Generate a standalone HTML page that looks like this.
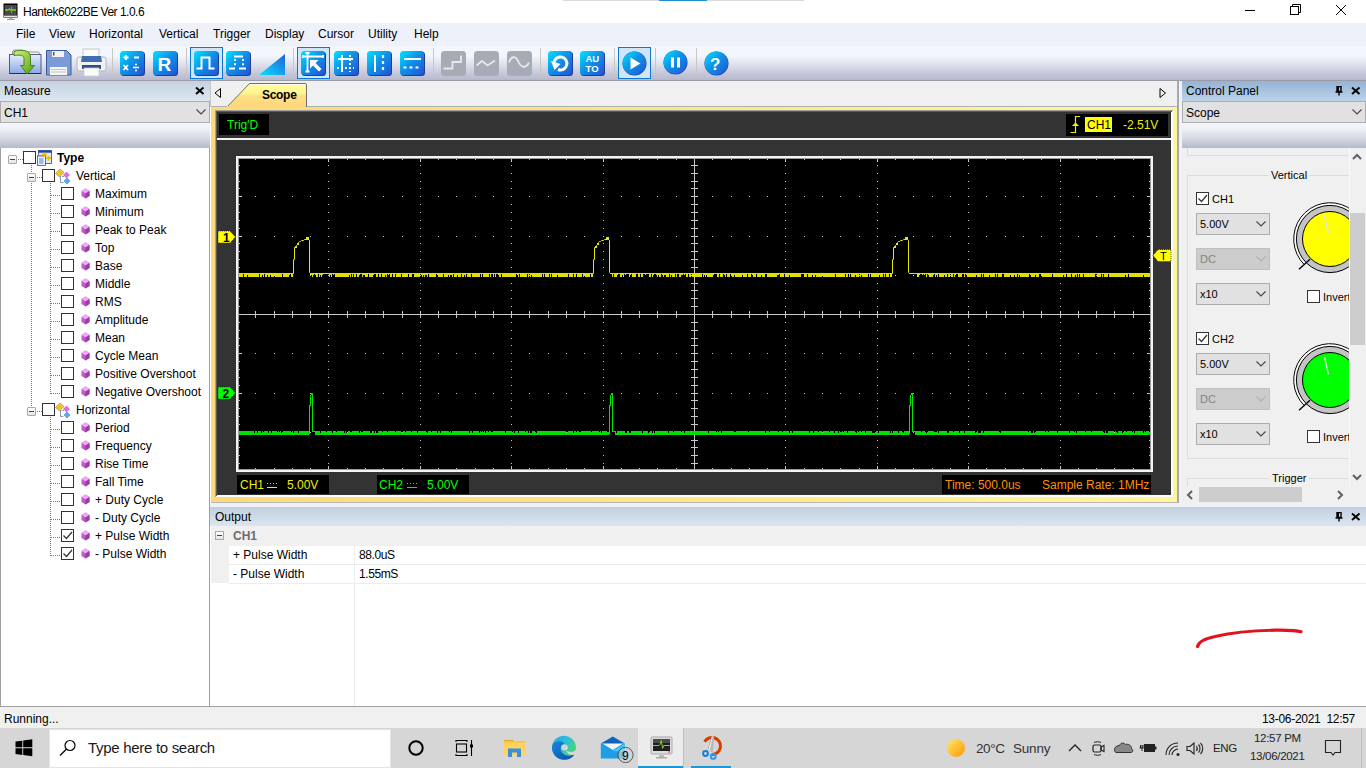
<!DOCTYPE html><html><head><meta charset="utf-8"><style>
*{margin:0;padding:0;box-sizing:border-box}
html,body{width:1366px;height:768px;overflow:hidden;background:#fff;font-family:"Liberation Sans", sans-serif;color:#000}
.ab{position:absolute}
.t{position:absolute;white-space:pre;line-height:1}
.s12{font-size:12px}
</style></head><body>

<div class="ab" style="left:0;top:0;width:1366px;height:23px;background:#fff"></div>
<div class="ab" style="left:563px;top:0;width:241px;height:1px;background:#dadada"></div>
<div class="ab" style="left:659px;top:0;width:48px;height:1px;background:#1f8fd1"></div>
<svg class="ab" style="left:2px;top:2px" width="18" height="18" viewBox="0 0 18 18">
<rect x="1.5" y="1.5" width="14" height="14" fill="#000"/>
<rect x="2.5" y="3" width="12" height="10" fill="#4a4a4a"/>
<rect x="2" y="13.5" width="13" height="1.5" fill="#e8e8e8"/>
<path d="M3 8h3l1.5-1 1 1 1.5 0 1 0h3" stroke="#7ed321" stroke-width="1.3" fill="none"/>
<path d="M9.5 5v6" stroke="#6cbf1a" stroke-width="1" fill="none"/>
<rect x="7" y="16" width="4" height="1" fill="#bbb"/><rect x="5" y="17" width="8" height="1" fill="#999"/>
</svg>
<div class="t" style="left:23px;top:6px;font-size:12px;letter-spacing:-0.5px;color:#000">Hantek6022BE Ver 1.0.6</div>
<svg class="ab" style="left:1240px;top:0" width="126" height="22" viewBox="0 0 126 22">
<path d="M5 10.5h10" stroke="#000" stroke-width="1"/>
<rect x="50.5" y="6.5" width="8" height="8" fill="none" stroke="#000" stroke-width="1"/>
<path d="M52.5 6.5v-2h8v8h-2" fill="none" stroke="#000" stroke-width="1"/>
<path d="M96 5l10 10M106 5l-10 10" stroke="#000" stroke-width="1"/>
</svg>
<div class="ab" style="left:0;top:23px;width:1366px;height:23px;background:#eef1fa"></div>
<div class="t" style="left:16px;top:28px;font-size:12px;color:#000">File</div>
<div class="t" style="left:49px;top:28px;font-size:12px;color:#000">View</div>
<div class="t" style="left:89px;top:28px;font-size:12px;color:#000">Horizontal</div>
<div class="t" style="left:159px;top:28px;font-size:12px;color:#000">Vertical</div>
<div class="t" style="left:213px;top:28px;font-size:12px;color:#000">Trigger</div>
<div class="t" style="left:265px;top:28px;font-size:12px;color:#000">Display</div>
<div class="t" style="left:318px;top:28px;font-size:12px;color:#000">Cursor</div>
<div class="t" style="left:368px;top:28px;font-size:12px;color:#000">Utility</div>
<div class="t" style="left:414px;top:28px;font-size:12px;color:#000">Help</div>
<div class="ab" style="left:0;top:46px;width:1366px;height:35px;background:linear-gradient(#f3f6fc 0%,#f3f6fc 28%,#e2e4ef 48%,#c9cbdc 75%,#b3b5cb 100%)"></div>
<div class="ab" style="left:0;top:80px;width:1366px;height:1px;background:#9c9ca6"></div>
<svg class="ab" style="left:6px;top:46px" width="40" height="34" viewBox="0 0 40 34">
<defs><linearGradient id="fld" x1="0" y1="0" x2="0" y2="1"><stop offset="0" stop-color="#e6eefa"/><stop offset="1" stop-color="#88a8e6"/></linearGradient>
<linearGradient id="arr" x1="0" y1="0" x2="1" y2="1"><stop offset="0" stop-color="#d4ef7a"/><stop offset="1" stop-color="#52a012"/></linearGradient></defs>
<path d="M6.5 8V5.5l1.5-1.5H16.5l1.5 2H32.5l1.5 2V9" fill="#f4f4ee" stroke="#8a8a80" stroke-width="0.9"/>
<rect x="3.5" y="8.5" width="31.5" height="19" fill="url(#fld)" stroke="#4e5e80" stroke-width="1"/>
<path d="M3.5 27.5h31.5" stroke="#1e2e50" stroke-width="1"/>
<path d="M8 5.5C15 3.5 24.5 3.5 24.5 11V19.5H28.5L21.2 28L14.5 19.5H18V12.5C18 9.5 14 8.5 8 9.5z" fill="url(#arr)" stroke="#3c7a10" stroke-width="0.9"/>
</svg>
<svg class="ab" style="left:46px;top:50px" width="26" height="26" viewBox="0 0 26 26">
<path d="M0.5 0.5h20l4.5 4.5v20H0.5z" fill="#7a9bd8" stroke="#3a5a9a" stroke-width="1"/>
<rect x="6" y="1" width="12" height="6" fill="#f2f2f2"/><rect x="7" y="2" width="1.5" height="3.5" fill="#555"/>
<rect x="4" y="17" width="17" height="8" fill="#f6f6f6"/>
<path d="M5 19.5h15M5 22h15" stroke="#aab" stroke-width="0.7"/>
</svg>
<svg class="ab" style="left:76px;top:48px" width="31" height="30" viewBox="0 0 31 30">
<rect x="7" y="1" width="16" height="11" fill="#fafafa" stroke="#bbb" stroke-width="0.8"/>
<rect x="1" y="9" width="29" height="14" rx="2" fill="#f2f2f2" stroke="#b5b5b5" stroke-width="1"/>
<path d="M6 8h19l1 6H5z" fill="#3e6db0"/>
<rect x="6" y="17" width="19" height="4" fill="#2c4f86"/>
<rect x="8" y="20" width="15" height="8" fill="#fbfbfb" stroke="#ccc" stroke-width="0.8"/>
</svg>
<div class="ab" style="left:112px;top:48px;width:1px;height:30px;background:#c9c6c2"></div>
<svg class="ab" style="left:120px;top:51px" width="25" height="25" viewBox="0 0 25 25"><defs><linearGradient id="g120" x1="0" y1="0" x2="1" y2="1"><stop offset="0" stop-color="#00e4ff"/><stop offset="0.45" stop-color="#0e95e8"/><stop offset="1" stop-color="#2152d6"/></linearGradient></defs><rect x="0.5" y="0.5" width="24.5" height="24.5" rx="3.5" fill="#233e8f"/><rect x="0" y="0" width="24" height="24" rx="3.5" fill="url(#g120)"/><path d="M3.5 6.5h5M6 4v5M14 6.5h5" stroke="#fff" stroke-width="1.8"/><path d="M3.5 14l4.5 5M8 14l-4.5 5" stroke="#fff" stroke-width="1.8"/><path d="M13 16.5h6" stroke="#fff" stroke-width="1.6"/><circle cx="16" cy="13.5" r="1" fill="#fff"/><circle cx="16" cy="19.5" r="1" fill="#fff"/></svg>
<svg class="ab" style="left:153px;top:51px" width="25" height="25" viewBox="0 0 25 25"><defs><linearGradient id="g153" x1="0" y1="0" x2="1" y2="1"><stop offset="0" stop-color="#00e4ff"/><stop offset="0.45" stop-color="#0e95e8"/><stop offset="1" stop-color="#2152d6"/></linearGradient></defs><rect x="0.5" y="0.5" width="24.5" height="24.5" rx="3.5" fill="#233e8f"/><rect x="0" y="0" width="24" height="24" rx="3.5" fill="url(#g153)"/><text x="4.5" y="20" font-family="Liberation Sans" font-weight="700" font-size="19" fill="#fff">R</text></svg>
<div class="ab" style="left:186px;top:48px;width:1px;height:30px;background:#c9c6c2"></div>
<div class="ab" style="left:190px;top:47px;width:33px;height:32px;border:1px solid #0a78d6;background:#d0e5f7"></div>
<svg class="ab" style="left:194px;top:51px" width="25" height="25" viewBox="0 0 25 25"><defs><linearGradient id="g194" x1="0" y1="0" x2="1" y2="1"><stop offset="0" stop-color="#00e4ff"/><stop offset="0.45" stop-color="#0e95e8"/><stop offset="1" stop-color="#2152d6"/></linearGradient></defs><rect x="0.5" y="0.5" width="24.5" height="24.5" rx="3.5" fill="#233e8f"/><rect x="0" y="0" width="24" height="24" rx="3.5" fill="url(#g194)"/><path d="M2.5 17.5h5v-11h8v11h5" stroke="#fff" fill="none" stroke-width="2"/></svg>
<svg class="ab" style="left:226px;top:51px" width="25" height="25" viewBox="0 0 25 25"><defs><linearGradient id="g226" x1="0" y1="0" x2="1" y2="1"><stop offset="0" stop-color="#00e4ff"/><stop offset="0.45" stop-color="#0e95e8"/><stop offset="1" stop-color="#2152d6"/></linearGradient></defs><rect x="0.5" y="0.5" width="24.5" height="24.5" rx="3.5" fill="#233e8f"/><rect x="0" y="0" width="24" height="24" rx="3.5" fill="url(#g226)"/><path d="M3 17.5h6M13 17.5h7M8 5.5h9" stroke="#fff" fill="none" stroke-width="2"/><path d="M9 8v8M17 8v8" stroke="#fff" stroke-width="2" stroke-dasharray="2 2.2" fill="none"/></svg>
<svg class="ab" style="left:259px;top:53px" width="27" height="23" viewBox="0 0 27 23"><defs><linearGradient id="tri" x1="0" y1="1" x2="1" y2="0"><stop offset="0" stop-color="#0ae0ff"/><stop offset="1" stop-color="#2260d8"/></linearGradient></defs><path d="M0 22L26 1V22z" fill="url(#tri)"/></svg>
<div class="ab" style="left:293px;top:48px;width:1px;height:30px;background:#c9c6c2"></div>
<div class="ab" style="left:297px;top:47px;width:33px;height:32px;border:1px solid #0a78d6;background:#d0e5f7"></div>
<svg class="ab" style="left:301px;top:51px" width="25" height="25" viewBox="0 0 25 25"><defs><linearGradient id="g301" x1="0" y1="0" x2="1" y2="1"><stop offset="0" stop-color="#00e4ff"/><stop offset="0.45" stop-color="#0e95e8"/><stop offset="1" stop-color="#2152d6"/></linearGradient></defs><rect x="0.5" y="0.5" width="24.5" height="24.5" rx="3.5" fill="#233e8f"/><rect x="0" y="0" width="24" height="24" rx="3.5" fill="url(#g301)"/><path d="M2 5.5h20M2 4v3M22 4v3M6.5 2v19M4.5 2h4M4.5 20.5h4" stroke="#fff" stroke-width="1.8" fill="none"/><path d="M9 9l8.5 0-3 3 6 6-2.5 2.5-6-6-3 3z" fill="#fff"/></svg>
<svg class="ab" style="left:334px;top:51px" width="25" height="25" viewBox="0 0 25 25"><defs><linearGradient id="g334" x1="0" y1="0" x2="1" y2="1"><stop offset="0" stop-color="#00e4ff"/><stop offset="0.45" stop-color="#0e95e8"/><stop offset="1" stop-color="#2152d6"/></linearGradient></defs><rect x="0.5" y="0.5" width="24.5" height="24.5" rx="3.5" fill="#233e8f"/><rect x="0" y="0" width="24" height="24" rx="3.5" fill="url(#g334)"/><path d="M4 8h15M8 4v17" stroke="#fff" stroke-width="2" fill="none"/><path d="M3 17h17M16 4v17" stroke="#fff" stroke-width="2" stroke-dasharray="2 2" fill="none"/></svg>
<svg class="ab" style="left:367px;top:51px" width="25" height="25" viewBox="0 0 25 25"><defs><linearGradient id="g367" x1="0" y1="0" x2="1" y2="1"><stop offset="0" stop-color="#00e4ff"/><stop offset="0.45" stop-color="#0e95e8"/><stop offset="1" stop-color="#2152d6"/></linearGradient></defs><rect x="0.5" y="0.5" width="24.5" height="24.5" rx="3.5" fill="#233e8f"/><rect x="0" y="0" width="24" height="24" rx="3.5" fill="url(#g367)"/><path d="M8 4v17" stroke="#fff" stroke-width="2" fill="none"/><path d="M16 4v17" stroke="#fff" stroke-width="2.2" stroke-dasharray="3 3" fill="none"/></svg>
<svg class="ab" style="left:400px;top:51px" width="25" height="25" viewBox="0 0 25 25"><defs><linearGradient id="g400" x1="0" y1="0" x2="1" y2="1"><stop offset="0" stop-color="#00e4ff"/><stop offset="0.45" stop-color="#0e95e8"/><stop offset="1" stop-color="#2152d6"/></linearGradient></defs><rect x="0.5" y="0.5" width="24.5" height="24.5" rx="3.5" fill="#233e8f"/><rect x="0" y="0" width="24" height="24" rx="3.5" fill="url(#g400)"/><path d="M4 8h17" stroke="#fff" stroke-width="2" fill="none"/><path d="M3.5 16.5h17" stroke="#fff" stroke-width="2.2" stroke-dasharray="3 3" fill="none"/></svg>
<div class="ab" style="left:433px;top:48px;width:1px;height:30px;background:#c9c6c2"></div>
<svg class="ab" style="left:441px;top:51px" width="25" height="25" viewBox="0 0 25 25"><rect x="0" y="0" width="25" height="25" rx="3.5" fill="#a6abb6"/><path d="M2.5 17.5h9v-6.5h8.5V4.5" stroke="#e6e8ee" fill="none" stroke-width="1.8"/></svg>
<svg class="ab" style="left:474px;top:51px" width="25" height="25" viewBox="0 0 25 25"><rect x="0" y="0" width="25" height="25" rx="3.5" fill="#a6abb6"/><path d="M2.5 14.5L8 10l5.5 4.5L21 9.5" stroke="#e6e8ee" fill="none" stroke-width="1.8"/></svg>
<svg class="ab" style="left:507px;top:51px" width="25" height="25" viewBox="0 0 25 25"><rect x="0" y="0" width="25" height="25" rx="3.5" fill="#a6abb6"/><path d="M2 11.5C4 5 8.5 4.5 11 10S18 19 22 11.5" stroke="#e6e8ee" fill="none" stroke-width="1.8"/></svg>
<div class="ab" style="left:540px;top:48px;width:1px;height:30px;background:#c9c6c2"></div>
<svg class="ab" style="left:548px;top:51px" width="25" height="25" viewBox="0 0 25 25"><defs><linearGradient id="g548" x1="0" y1="0" x2="1" y2="1"><stop offset="0" stop-color="#00e4ff"/><stop offset="0.45" stop-color="#0e95e8"/><stop offset="1" stop-color="#2152d6"/></linearGradient></defs><rect x="0.5" y="0.5" width="24.5" height="24.5" rx="3.5" fill="#233e8f"/><rect x="0" y="0" width="24" height="24" rx="3.5" fill="url(#g548)"/><path d="M10 18.5a6.5 6.5 0 1 0 -4-7" stroke="#fff" stroke-width="3" fill="none"/><path d="M3 10l3.5 9 6-6z" fill="#fff"/></svg>
<svg class="ab" style="left:580px;top:51px" width="25" height="25" viewBox="0 0 25 25"><defs><linearGradient id="g580" x1="0" y1="0" x2="1" y2="1"><stop offset="0" stop-color="#00e4ff"/><stop offset="0.45" stop-color="#0e95e8"/><stop offset="1" stop-color="#2152d6"/></linearGradient></defs><rect x="0.5" y="0.5" width="24.5" height="24.5" rx="3.5" fill="#233e8f"/><rect x="0" y="0" width="24" height="24" rx="3.5" fill="url(#g580)"/><text x="5.5" y="10.5" font-family="Liberation Sans" font-weight="700" font-size="9.5" fill="#fff">AU</text><text x="5.5" y="20.5" font-family="Liberation Sans" font-weight="700" font-size="9.5" fill="#fff">TO</text></svg>
<div class="ab" style="left:614px;top:48px;width:1px;height:30px;background:#c9c6c2"></div>
<div class="ab" style="left:618px;top:47px;width:33px;height:32px;border:1px solid #0a78d6;background:#d0e5f7"></div>
<svg class="ab" style="left:622px;top:51px" width="25" height="25" viewBox="0 0 25 25"><defs><linearGradient id="g622" x1="0" y1="0" x2="1" y2="1"><stop offset="0" stop-color="#00e4ff"/><stop offset="0.45" stop-color="#0e95e8"/><stop offset="1" stop-color="#2152d6"/></linearGradient></defs><circle cx="12.5" cy="12.5" r="12" fill="#1c3f9a"/><circle cx="12.3" cy="12.2" r="11.7" fill="url(#g622)"/><path d="M8.5 6.5v12l10-6z" fill="#fff"/></svg>
<div class="ab" style="left:655px;top:48px;width:1px;height:30px;background:#c9c6c2"></div>
<svg class="ab" style="left:663px;top:50px" width="25" height="25" viewBox="0 0 25 25"><defs><linearGradient id="g663" x1="0" y1="0" x2="1" y2="1"><stop offset="0" stop-color="#00e4ff"/><stop offset="0.45" stop-color="#0e95e8"/><stop offset="1" stop-color="#2152d6"/></linearGradient></defs><circle cx="12.5" cy="12.5" r="12" fill="#1c3f9a"/><circle cx="12.3" cy="12.2" r="11.7" fill="url(#g663)"/><rect x="8" y="7.5" width="3" height="10" fill="#fff"/><rect x="14" y="7.5" width="3" height="10" fill="#fff"/></svg>
<div class="ab" style="left:696px;top:48px;width:1px;height:30px;background:#c9c6c2"></div>
<svg class="ab" style="left:704px;top:51px" width="25" height="25" viewBox="0 0 25 25"><defs><linearGradient id="g704" x1="0" y1="0" x2="1" y2="1"><stop offset="0" stop-color="#00e4ff"/><stop offset="0.45" stop-color="#0e95e8"/><stop offset="1" stop-color="#2152d6"/></linearGradient></defs><circle cx="12.5" cy="12.5" r="12" fill="#1c3f9a"/><circle cx="12.3" cy="12.2" r="11.7" fill="url(#g704)"/><text x="6" y="19" font-family="Liberation Sans" font-weight="700" font-size="17" fill="#fff">?</text></svg>
<div class="ab" style="left:0;top:81px;width:210px;height:20px;background:linear-gradient(#c4d2e0,#dde7f2)"></div>
<div class="t" style="left:4px;top:85px;font-size:12px">Measure</div>
<svg class="ab" style="left:194px;top:85px" width="12" height="12" viewBox="0 0 12 12"><path d="M2 2.5l7.5 6.5M9.5 2.5l-7.5 6.5" stroke="#000" stroke-width="1.9"/></svg>
<div class="ab" style="left:0px;top:101px;width:210px;height:22px;background:#e1e1e1;border:1px solid #adadad"></div>
<div class="t" style="left:4px;top:107px;font-size:12px;color:#000">CH1</div>
<svg class="ab" style="left:196px;top:109px" width="10" height="6" viewBox="0 0 10 6"><path d="M0.5 0.5l4.5 4.5 4.5-4.5" stroke="#444" stroke-width="1.1" fill="none"/></svg>
<div class="ab" style="left:0;top:123px;width:210px;height:25px;background:linear-gradient(#f3f6fb 0%,#eef1f7 25%,#cfd1dd 70%,#b6b9c9 100%)"></div>
<div class="ab" style="left:0;top:148px;width:210px;height:559px;background:#fff;border-left:1px solid #a0a0a0;border-right:1px solid #a0a0a0;border-bottom:1px solid #a0a0a0"></div>
<div class="ab" style="left:8px;top:155px;width:9px;height:9px;border:1px solid #a9a9a9;border-radius:1px;background:linear-gradient(#fff,#e4e4e4)"></div>
<div class="ab" style="left:10px;top:159px;width:5px;height:1px;background:#2b3f9a"></div>
<div class="ab" style="left:18px;top:159px;width:5px;height:1px;background:repeating-linear-gradient(90deg,#777 0 1px,transparent 1px 2px)"></div>
<div class="ab" style="left:23px;top:151px;width:13px;height:13px;border:1px solid #333;background:#fff"></div>
<svg class="ab" style="left:36px;top:150px" width="16" height="16" viewBox="0 0 16 16">
<rect x="2.5" y="0.5" width="13" height="13" fill="#dfe8f6" stroke="#3a4a6a" stroke-width="0.8"/><rect x="2.5" y="0.5" width="13" height="2.2" fill="#1e3cc8"/>
<path d="M0.8 5.5h5v8.5" fill="none" stroke="#f0c030" stroke-width="1.2"/>
<rect x="1.5" y="6" width="8" height="9.5" fill="#eef3fb" stroke="#3e5080" stroke-width="0.8"/>
<path d="M3 9h4.5M3 11h4.5M3 13h4.5" stroke="#3a70e0" stroke-width="0.9"/>
<path d="M6 4.5h5M8.5 2.5v4.5M10 8h5M12.5 6v4.5" stroke="#e8b800" stroke-width="1.5"/>
</svg>
<div class="t" style="left:57px;top:152px;font-size:12px;font-weight:700">Type</div>
<div class="ab" style="left:31px;top:165px;width:1px;height:244px;background:repeating-linear-gradient(#777 0 1px,transparent 1px 2px)"></div>
<div class="ab" style="left:27px;top:173px;width:9px;height:9px;border:1px solid #a9a9a9;border-radius:1px;background:linear-gradient(#fff,#e4e4e4)"></div>
<div class="ab" style="left:29px;top:177px;width:5px;height:1px;background:#2b3f9a"></div>
<div class="ab" style="left:37px;top:177px;width:5px;height:1px;background:repeating-linear-gradient(90deg,#777 0 1px,transparent 1px 2px)"></div>
<div class="ab" style="left:42px;top:169px;width:13px;height:13px;border:1px solid #333;background:#fff"></div>
<svg class="ab" style="left:55px;top:168px" width="16" height="16" viewBox="0 0 16 16">
<path d="M0.5 5.5L5 1l4 3.5-4.5 4.5z" fill="#f2c230" stroke="#b08a10" stroke-width="0.6"/>
<path d="M5.5 8v6.5h3M7 8.5h2" stroke="#6a80a8" stroke-width="0.8" fill="none"/>
<path d="M8.5 7l3-3 3 3-3 3z" fill="#e070e8" stroke="#b040c0" stroke-width="0.5"/>
<path d="M9 13l3-3 3 3-3 3z" fill="#5aa8f4" stroke="#2a70c0" stroke-width="0.5"/>
</svg>
<div class="t" style="left:76px;top:170px;font-size:12px">Vertical</div>
<div class="ab" style="left:50px;top:183px;width:1px;height:211px;background:repeating-linear-gradient(#777 0 1px,transparent 1px 2px)"></div>
<div class="ab" style="left:51px;top:195px;width:10px;height:1px;background:repeating-linear-gradient(90deg,#777 0 1px,transparent 1px 2px)"></div>
<div class="ab" style="left:61px;top:187px;width:13px;height:13px;border:1px solid #333;background:#fff"></div>
<svg class="ab" style="left:81px;top:188px" width="9" height="11" viewBox="0 0 9 11"><path d="M4.5 0.5L8.5 3v5L4.5 10.5 0.5 8V3z" fill="#c05ac8"/><path d="M4.5 0.5L8.5 3 4.5 5.5 0.5 3z" fill="#f0a8f4"/><path d="M4.5 5.5L8.5 3v5L4.5 10.5z" fill="#9c3aa8"/></svg>
<div class="t" style="left:95px;top:188px;font-size:12px">Maximum</div>
<div class="ab" style="left:51px;top:213px;width:10px;height:1px;background:repeating-linear-gradient(90deg,#777 0 1px,transparent 1px 2px)"></div>
<div class="ab" style="left:61px;top:205px;width:13px;height:13px;border:1px solid #333;background:#fff"></div>
<svg class="ab" style="left:81px;top:206px" width="9" height="11" viewBox="0 0 9 11"><path d="M4.5 0.5L8.5 3v5L4.5 10.5 0.5 8V3z" fill="#c05ac8"/><path d="M4.5 0.5L8.5 3 4.5 5.5 0.5 3z" fill="#f0a8f4"/><path d="M4.5 5.5L8.5 3v5L4.5 10.5z" fill="#9c3aa8"/></svg>
<div class="t" style="left:95px;top:206px;font-size:12px">Minimum</div>
<div class="ab" style="left:51px;top:231px;width:10px;height:1px;background:repeating-linear-gradient(90deg,#777 0 1px,transparent 1px 2px)"></div>
<div class="ab" style="left:61px;top:223px;width:13px;height:13px;border:1px solid #333;background:#fff"></div>
<svg class="ab" style="left:81px;top:224px" width="9" height="11" viewBox="0 0 9 11"><path d="M4.5 0.5L8.5 3v5L4.5 10.5 0.5 8V3z" fill="#c05ac8"/><path d="M4.5 0.5L8.5 3 4.5 5.5 0.5 3z" fill="#f0a8f4"/><path d="M4.5 5.5L8.5 3v5L4.5 10.5z" fill="#9c3aa8"/></svg>
<div class="t" style="left:95px;top:224px;font-size:12px">Peak to Peak</div>
<div class="ab" style="left:51px;top:249px;width:10px;height:1px;background:repeating-linear-gradient(90deg,#777 0 1px,transparent 1px 2px)"></div>
<div class="ab" style="left:61px;top:241px;width:13px;height:13px;border:1px solid #333;background:#fff"></div>
<svg class="ab" style="left:81px;top:242px" width="9" height="11" viewBox="0 0 9 11"><path d="M4.5 0.5L8.5 3v5L4.5 10.5 0.5 8V3z" fill="#c05ac8"/><path d="M4.5 0.5L8.5 3 4.5 5.5 0.5 3z" fill="#f0a8f4"/><path d="M4.5 5.5L8.5 3v5L4.5 10.5z" fill="#9c3aa8"/></svg>
<div class="t" style="left:95px;top:242px;font-size:12px">Top</div>
<div class="ab" style="left:51px;top:267px;width:10px;height:1px;background:repeating-linear-gradient(90deg,#777 0 1px,transparent 1px 2px)"></div>
<div class="ab" style="left:61px;top:259px;width:13px;height:13px;border:1px solid #333;background:#fff"></div>
<svg class="ab" style="left:81px;top:260px" width="9" height="11" viewBox="0 0 9 11"><path d="M4.5 0.5L8.5 3v5L4.5 10.5 0.5 8V3z" fill="#c05ac8"/><path d="M4.5 0.5L8.5 3 4.5 5.5 0.5 3z" fill="#f0a8f4"/><path d="M4.5 5.5L8.5 3v5L4.5 10.5z" fill="#9c3aa8"/></svg>
<div class="t" style="left:95px;top:260px;font-size:12px">Base</div>
<div class="ab" style="left:51px;top:285px;width:10px;height:1px;background:repeating-linear-gradient(90deg,#777 0 1px,transparent 1px 2px)"></div>
<div class="ab" style="left:61px;top:277px;width:13px;height:13px;border:1px solid #333;background:#fff"></div>
<svg class="ab" style="left:81px;top:278px" width="9" height="11" viewBox="0 0 9 11"><path d="M4.5 0.5L8.5 3v5L4.5 10.5 0.5 8V3z" fill="#c05ac8"/><path d="M4.5 0.5L8.5 3 4.5 5.5 0.5 3z" fill="#f0a8f4"/><path d="M4.5 5.5L8.5 3v5L4.5 10.5z" fill="#9c3aa8"/></svg>
<div class="t" style="left:95px;top:278px;font-size:12px">Middle</div>
<div class="ab" style="left:51px;top:303px;width:10px;height:1px;background:repeating-linear-gradient(90deg,#777 0 1px,transparent 1px 2px)"></div>
<div class="ab" style="left:61px;top:295px;width:13px;height:13px;border:1px solid #333;background:#fff"></div>
<svg class="ab" style="left:81px;top:296px" width="9" height="11" viewBox="0 0 9 11"><path d="M4.5 0.5L8.5 3v5L4.5 10.5 0.5 8V3z" fill="#c05ac8"/><path d="M4.5 0.5L8.5 3 4.5 5.5 0.5 3z" fill="#f0a8f4"/><path d="M4.5 5.5L8.5 3v5L4.5 10.5z" fill="#9c3aa8"/></svg>
<div class="t" style="left:95px;top:296px;font-size:12px">RMS</div>
<div class="ab" style="left:51px;top:321px;width:10px;height:1px;background:repeating-linear-gradient(90deg,#777 0 1px,transparent 1px 2px)"></div>
<div class="ab" style="left:61px;top:313px;width:13px;height:13px;border:1px solid #333;background:#fff"></div>
<svg class="ab" style="left:81px;top:314px" width="9" height="11" viewBox="0 0 9 11"><path d="M4.5 0.5L8.5 3v5L4.5 10.5 0.5 8V3z" fill="#c05ac8"/><path d="M4.5 0.5L8.5 3 4.5 5.5 0.5 3z" fill="#f0a8f4"/><path d="M4.5 5.5L8.5 3v5L4.5 10.5z" fill="#9c3aa8"/></svg>
<div class="t" style="left:95px;top:314px;font-size:12px">Amplitude</div>
<div class="ab" style="left:51px;top:339px;width:10px;height:1px;background:repeating-linear-gradient(90deg,#777 0 1px,transparent 1px 2px)"></div>
<div class="ab" style="left:61px;top:331px;width:13px;height:13px;border:1px solid #333;background:#fff"></div>
<svg class="ab" style="left:81px;top:332px" width="9" height="11" viewBox="0 0 9 11"><path d="M4.5 0.5L8.5 3v5L4.5 10.5 0.5 8V3z" fill="#c05ac8"/><path d="M4.5 0.5L8.5 3 4.5 5.5 0.5 3z" fill="#f0a8f4"/><path d="M4.5 5.5L8.5 3v5L4.5 10.5z" fill="#9c3aa8"/></svg>
<div class="t" style="left:95px;top:332px;font-size:12px">Mean</div>
<div class="ab" style="left:51px;top:357px;width:10px;height:1px;background:repeating-linear-gradient(90deg,#777 0 1px,transparent 1px 2px)"></div>
<div class="ab" style="left:61px;top:349px;width:13px;height:13px;border:1px solid #333;background:#fff"></div>
<svg class="ab" style="left:81px;top:350px" width="9" height="11" viewBox="0 0 9 11"><path d="M4.5 0.5L8.5 3v5L4.5 10.5 0.5 8V3z" fill="#c05ac8"/><path d="M4.5 0.5L8.5 3 4.5 5.5 0.5 3z" fill="#f0a8f4"/><path d="M4.5 5.5L8.5 3v5L4.5 10.5z" fill="#9c3aa8"/></svg>
<div class="t" style="left:95px;top:350px;font-size:12px">Cycle Mean</div>
<div class="ab" style="left:51px;top:375px;width:10px;height:1px;background:repeating-linear-gradient(90deg,#777 0 1px,transparent 1px 2px)"></div>
<div class="ab" style="left:61px;top:367px;width:13px;height:13px;border:1px solid #333;background:#fff"></div>
<svg class="ab" style="left:81px;top:368px" width="9" height="11" viewBox="0 0 9 11"><path d="M4.5 0.5L8.5 3v5L4.5 10.5 0.5 8V3z" fill="#c05ac8"/><path d="M4.5 0.5L8.5 3 4.5 5.5 0.5 3z" fill="#f0a8f4"/><path d="M4.5 5.5L8.5 3v5L4.5 10.5z" fill="#9c3aa8"/></svg>
<div class="t" style="left:95px;top:368px;font-size:12px">Positive Overshoot</div>
<div class="ab" style="left:51px;top:393px;width:10px;height:1px;background:repeating-linear-gradient(90deg,#777 0 1px,transparent 1px 2px)"></div>
<div class="ab" style="left:61px;top:385px;width:13px;height:13px;border:1px solid #333;background:#fff"></div>
<svg class="ab" style="left:81px;top:386px" width="9" height="11" viewBox="0 0 9 11"><path d="M4.5 0.5L8.5 3v5L4.5 10.5 0.5 8V3z" fill="#c05ac8"/><path d="M4.5 0.5L8.5 3 4.5 5.5 0.5 3z" fill="#f0a8f4"/><path d="M4.5 5.5L8.5 3v5L4.5 10.5z" fill="#9c3aa8"/></svg>
<div class="t" style="left:95px;top:386px;font-size:12px">Negative Overshoot</div>
<div class="ab" style="left:27px;top:407px;width:9px;height:9px;border:1px solid #a9a9a9;border-radius:1px;background:linear-gradient(#fff,#e4e4e4)"></div>
<div class="ab" style="left:29px;top:411px;width:5px;height:1px;background:#2b3f9a"></div>
<div class="ab" style="left:37px;top:411px;width:5px;height:1px;background:repeating-linear-gradient(90deg,#777 0 1px,transparent 1px 2px)"></div>
<div class="ab" style="left:42px;top:403px;width:13px;height:13px;border:1px solid #333;background:#fff"></div>
<svg class="ab" style="left:55px;top:402px" width="16" height="16" viewBox="0 0 16 16">
<path d="M0.5 5.5L5 1l4 3.5-4.5 4.5z" fill="#f2c230" stroke="#b08a10" stroke-width="0.6"/>
<path d="M5.5 8v6.5h3M7 8.5h2" stroke="#6a80a8" stroke-width="0.8" fill="none"/>
<path d="M8.5 7l3-3 3 3-3 3z" fill="#e070e8" stroke="#b040c0" stroke-width="0.5"/>
<path d="M9 13l3-3 3 3-3 3z" fill="#5aa8f4" stroke="#2a70c0" stroke-width="0.5"/>
</svg>
<div class="t" style="left:76px;top:404px;font-size:12px">Horizontal</div>
<div class="ab" style="left:51px;top:429px;width:10px;height:1px;background:repeating-linear-gradient(90deg,#777 0 1px,transparent 1px 2px)"></div>
<div class="ab" style="left:61px;top:421px;width:13px;height:13px;border:1px solid #333;background:#fff"></div>
<svg class="ab" style="left:81px;top:422px" width="9" height="11" viewBox="0 0 9 11"><path d="M4.5 0.5L8.5 3v5L4.5 10.5 0.5 8V3z" fill="#c05ac8"/><path d="M4.5 0.5L8.5 3 4.5 5.5 0.5 3z" fill="#f0a8f4"/><path d="M4.5 5.5L8.5 3v5L4.5 10.5z" fill="#9c3aa8"/></svg>
<div class="t" style="left:95px;top:422px;font-size:12px">Period</div>
<div class="ab" style="left:51px;top:447px;width:10px;height:1px;background:repeating-linear-gradient(90deg,#777 0 1px,transparent 1px 2px)"></div>
<div class="ab" style="left:61px;top:439px;width:13px;height:13px;border:1px solid #333;background:#fff"></div>
<svg class="ab" style="left:81px;top:440px" width="9" height="11" viewBox="0 0 9 11"><path d="M4.5 0.5L8.5 3v5L4.5 10.5 0.5 8V3z" fill="#c05ac8"/><path d="M4.5 0.5L8.5 3 4.5 5.5 0.5 3z" fill="#f0a8f4"/><path d="M4.5 5.5L8.5 3v5L4.5 10.5z" fill="#9c3aa8"/></svg>
<div class="t" style="left:95px;top:440px;font-size:12px">Frequency</div>
<div class="ab" style="left:51px;top:465px;width:10px;height:1px;background:repeating-linear-gradient(90deg,#777 0 1px,transparent 1px 2px)"></div>
<div class="ab" style="left:61px;top:457px;width:13px;height:13px;border:1px solid #333;background:#fff"></div>
<svg class="ab" style="left:81px;top:458px" width="9" height="11" viewBox="0 0 9 11"><path d="M4.5 0.5L8.5 3v5L4.5 10.5 0.5 8V3z" fill="#c05ac8"/><path d="M4.5 0.5L8.5 3 4.5 5.5 0.5 3z" fill="#f0a8f4"/><path d="M4.5 5.5L8.5 3v5L4.5 10.5z" fill="#9c3aa8"/></svg>
<div class="t" style="left:95px;top:458px;font-size:12px">Rise Time</div>
<div class="ab" style="left:51px;top:483px;width:10px;height:1px;background:repeating-linear-gradient(90deg,#777 0 1px,transparent 1px 2px)"></div>
<div class="ab" style="left:61px;top:475px;width:13px;height:13px;border:1px solid #333;background:#fff"></div>
<svg class="ab" style="left:81px;top:476px" width="9" height="11" viewBox="0 0 9 11"><path d="M4.5 0.5L8.5 3v5L4.5 10.5 0.5 8V3z" fill="#c05ac8"/><path d="M4.5 0.5L8.5 3 4.5 5.5 0.5 3z" fill="#f0a8f4"/><path d="M4.5 5.5L8.5 3v5L4.5 10.5z" fill="#9c3aa8"/></svg>
<div class="t" style="left:95px;top:476px;font-size:12px">Fall Time</div>
<div class="ab" style="left:51px;top:501px;width:10px;height:1px;background:repeating-linear-gradient(90deg,#777 0 1px,transparent 1px 2px)"></div>
<div class="ab" style="left:61px;top:493px;width:13px;height:13px;border:1px solid #333;background:#fff"></div>
<svg class="ab" style="left:81px;top:494px" width="9" height="11" viewBox="0 0 9 11"><path d="M4.5 0.5L8.5 3v5L4.5 10.5 0.5 8V3z" fill="#c05ac8"/><path d="M4.5 0.5L8.5 3 4.5 5.5 0.5 3z" fill="#f0a8f4"/><path d="M4.5 5.5L8.5 3v5L4.5 10.5z" fill="#9c3aa8"/></svg>
<div class="t" style="left:95px;top:494px;font-size:12px">+ Duty Cycle</div>
<div class="ab" style="left:51px;top:519px;width:10px;height:1px;background:repeating-linear-gradient(90deg,#777 0 1px,transparent 1px 2px)"></div>
<div class="ab" style="left:61px;top:511px;width:13px;height:13px;border:1px solid #333;background:#fff"></div>
<svg class="ab" style="left:81px;top:512px" width="9" height="11" viewBox="0 0 9 11"><path d="M4.5 0.5L8.5 3v5L4.5 10.5 0.5 8V3z" fill="#c05ac8"/><path d="M4.5 0.5L8.5 3 4.5 5.5 0.5 3z" fill="#f0a8f4"/><path d="M4.5 5.5L8.5 3v5L4.5 10.5z" fill="#9c3aa8"/></svg>
<div class="t" style="left:95px;top:512px;font-size:12px">- Duty Cycle</div>
<div class="ab" style="left:51px;top:537px;width:10px;height:1px;background:repeating-linear-gradient(90deg,#777 0 1px,transparent 1px 2px)"></div>
<div class="ab" style="left:61px;top:529px;width:13px;height:13px;border:1px solid #333;background:#fff"></div>
<svg class="ab" style="left:61px;top:529px" width="13" height="13" viewBox="0 0 13 13"><path d="M2.5 6.5l3 3 5.5-6.5" stroke="#333" stroke-width="1.2" fill="none"/></svg>
<svg class="ab" style="left:81px;top:530px" width="9" height="11" viewBox="0 0 9 11"><path d="M4.5 0.5L8.5 3v5L4.5 10.5 0.5 8V3z" fill="#c05ac8"/><path d="M4.5 0.5L8.5 3 4.5 5.5 0.5 3z" fill="#f0a8f4"/><path d="M4.5 5.5L8.5 3v5L4.5 10.5z" fill="#9c3aa8"/></svg>
<div class="t" style="left:95px;top:530px;font-size:12px">+ Pulse Width</div>
<div class="ab" style="left:51px;top:555px;width:10px;height:1px;background:repeating-linear-gradient(90deg,#777 0 1px,transparent 1px 2px)"></div>
<div class="ab" style="left:61px;top:547px;width:13px;height:13px;border:1px solid #333;background:#fff"></div>
<svg class="ab" style="left:61px;top:547px" width="13" height="13" viewBox="0 0 13 13"><path d="M2.5 6.5l3 3 5.5-6.5" stroke="#333" stroke-width="1.2" fill="none"/></svg>
<svg class="ab" style="left:81px;top:548px" width="9" height="11" viewBox="0 0 9 11"><path d="M4.5 0.5L8.5 3v5L4.5 10.5 0.5 8V3z" fill="#c05ac8"/><path d="M4.5 0.5L8.5 3 4.5 5.5 0.5 3z" fill="#f0a8f4"/><path d="M4.5 5.5L8.5 3v5L4.5 10.5z" fill="#9c3aa8"/></svg>
<div class="t" style="left:95px;top:548px;font-size:12px">- Pulse Width</div>
<div class="ab" style="left:50px;top:417px;width:1px;height:139px;background:repeating-linear-gradient(#777 0 1px,transparent 1px 2px)"></div>
<div class="ab" style="left:210px;top:81px;width:968px;height:26px;background:#f0f0f0;border-left:1px solid #c8c8c8"></div>
<div class="ab" style="left:211px;top:106px;width:967px;height:1px;background:#b0b0b0"></div>
<svg class="ab" style="left:214px;top:88px" width="8" height="10" viewBox="0 0 8 10"><path d="M6.5 0.5v9l-5.5-4.5z" fill="none" stroke="#000" stroke-width="1"/></svg>
<svg class="ab" style="left:1159px;top:88px" width="8" height="10" viewBox="0 0 8 10"><path d="M1 0.5v9l5.5-4.5z" fill="none" stroke="#000" stroke-width="1"/></svg>
<svg class="ab" style="left:226px;top:82px" width="82" height="26" viewBox="0 0 82 26"><defs><linearGradient id="tabg" x1="0" y1="0" x2="0" y2="1"><stop offset="0" stop-color="#fffb9c"/><stop offset="0.4" stop-color="#fff68f"/><stop offset="0.52" stop-color="#fde083"/><stop offset="1" stop-color="#fdd57c"/></linearGradient></defs><path d="M0.5 25.5L23.5 1.5H79Q80.5 1.5 80.5 3V25.5" fill="url(#tabg)" stroke="#707070" stroke-width="1"/><path d="M24 2.5H79.5" stroke="#fffde8" stroke-width="1"/><rect x="1" y="24" width="79" height="2" fill="#fcd57c"/></svg>
<div class="t" style="left:262px;top:89px;font-size:12px;font-weight:700;letter-spacing:-0.3px">Scope</div>
<div class="ab" style="left:211px;top:107px;width:967px;height:396px;background:linear-gradient(90deg,#fdd97a 0%,#fee282 35%,#fff094 75%,#fff59c 100%)"></div>
<div class="ab" style="left:1177px;top:81px;width:1px;height:422px;background:#a8a8a8"></div>
<div class="ab" style="left:211px;top:502px;width:967px;height:1px;background:#b8b8b0"></div>
<div class="ab" style="left:215px;top:110px;width:958px;height:387px;background:#fdfdfd;border-left:1px solid #a0a0a0;border-top:1px solid #a0a0a0"></div>
<div class="ab" style="left:216px;top:111px;width:956px;height:385px;background:#fdfdfd;border-left:1px solid #5a5a5a;border-top:1px solid #5a5a5a"></div>
<div class="ab" style="left:217px;top:112px;width:954px;height:383px;background:#333"></div>
<div class="ab" style="left:219px;top:114px;width:50px;height:21px;background:#000"></div>
<div class="t" style="left:227px;top:119px;font-size:12px;color:#00ff00">Trig'D</div>
<div class="ab" style="left:1066px;top:114px;width:102px;height:22px;background:#000"></div>
<svg class="ab" style="left:1069px;top:115px" width="12" height="20" viewBox="0 0 12 20"><path d="M1.5 17.5H6.5V1.5H11" stroke="#f0f000" stroke-width="1.2" fill="none"/><path d="M2.8 11l3.7-3.5 3.7 3.5z" fill="#f0f000"/></svg>
<div class="ab" style="left:1085px;top:117px;width:27px;height:15px;background:#ffff00"></div>
<div class="t" style="left:1087px;top:119px;font-size:12px;color:#000">CH1</div>
<div class="t" style="left:1123px;top:119px;font-size:12px;color:#f0f000">-2.51V</div>
<div class="ab" style="left:217px;top:138px;width:954px;height:2px;background:#f4f4f4"></div>
<div class="ab" style="left:236px;top:156px;width:917px;height:316px;border:2px solid #f4f4f4;background:#000;box-shadow:inset 0 0 0 1px #9a9a9a"></div>
<svg class="ab" style="left:0;top:0" width="1366" height="768" viewBox="0 0 1366 768"><path d="M328 165h1v1h-1zM328 173h1v1h-1zM328 181h1v1h-1zM328 188h1v1h-1zM328 196h1v1h-1zM328 204h1v1h-1zM328 212h1v1h-1zM328 220h1v1h-1zM328 228h1v1h-1zM328 236h1v1h-1zM328 243h1v1h-1zM328 251h1v1h-1zM328 259h1v1h-1zM328 267h1v1h-1zM328 275h1v1h-1zM328 283h1v1h-1zM328 290h1v1h-1zM328 298h1v1h-1zM328 306h1v1h-1zM328 314h1v1h-1zM328 322h1v1h-1zM328 330h1v1h-1zM328 338h1v1h-1zM328 345h1v1h-1zM328 353h1v1h-1zM328 361h1v1h-1zM328 369h1v1h-1zM328 377h1v1h-1zM328 385h1v1h-1zM328 393h1v1h-1zM328 400h1v1h-1zM328 408h1v1h-1zM328 416h1v1h-1zM328 424h1v1h-1zM328 432h1v1h-1zM328 440h1v1h-1zM328 447h1v1h-1zM328 455h1v1h-1zM328 463h1v1h-1zM420 165h1v1h-1zM420 173h1v1h-1zM420 181h1v1h-1zM420 188h1v1h-1zM420 196h1v1h-1zM420 204h1v1h-1zM420 212h1v1h-1zM420 220h1v1h-1zM420 228h1v1h-1zM420 236h1v1h-1zM420 243h1v1h-1zM420 251h1v1h-1zM420 259h1v1h-1zM420 267h1v1h-1zM420 275h1v1h-1zM420 283h1v1h-1zM420 290h1v1h-1zM420 298h1v1h-1zM420 306h1v1h-1zM420 314h1v1h-1zM420 322h1v1h-1zM420 330h1v1h-1zM420 338h1v1h-1zM420 345h1v1h-1zM420 353h1v1h-1zM420 361h1v1h-1zM420 369h1v1h-1zM420 377h1v1h-1zM420 385h1v1h-1zM420 393h1v1h-1zM420 400h1v1h-1zM420 408h1v1h-1zM420 416h1v1h-1zM420 424h1v1h-1zM420 432h1v1h-1zM420 440h1v1h-1zM420 447h1v1h-1zM420 455h1v1h-1zM420 463h1v1h-1zM511 165h1v1h-1zM511 173h1v1h-1zM511 181h1v1h-1zM511 188h1v1h-1zM511 196h1v1h-1zM511 204h1v1h-1zM511 212h1v1h-1zM511 220h1v1h-1zM511 228h1v1h-1zM511 236h1v1h-1zM511 243h1v1h-1zM511 251h1v1h-1zM511 259h1v1h-1zM511 267h1v1h-1zM511 275h1v1h-1zM511 283h1v1h-1zM511 290h1v1h-1zM511 298h1v1h-1zM511 306h1v1h-1zM511 314h1v1h-1zM511 322h1v1h-1zM511 330h1v1h-1zM511 338h1v1h-1zM511 345h1v1h-1zM511 353h1v1h-1zM511 361h1v1h-1zM511 369h1v1h-1zM511 377h1v1h-1zM511 385h1v1h-1zM511 393h1v1h-1zM511 400h1v1h-1zM511 408h1v1h-1zM511 416h1v1h-1zM511 424h1v1h-1zM511 432h1v1h-1zM511 440h1v1h-1zM511 447h1v1h-1zM511 455h1v1h-1zM511 463h1v1h-1zM603 165h1v1h-1zM603 173h1v1h-1zM603 181h1v1h-1zM603 188h1v1h-1zM603 196h1v1h-1zM603 204h1v1h-1zM603 212h1v1h-1zM603 220h1v1h-1zM603 228h1v1h-1zM603 236h1v1h-1zM603 243h1v1h-1zM603 251h1v1h-1zM603 259h1v1h-1zM603 267h1v1h-1zM603 275h1v1h-1zM603 283h1v1h-1zM603 290h1v1h-1zM603 298h1v1h-1zM603 306h1v1h-1zM603 314h1v1h-1zM603 322h1v1h-1zM603 330h1v1h-1zM603 338h1v1h-1zM603 345h1v1h-1zM603 353h1v1h-1zM603 361h1v1h-1zM603 369h1v1h-1zM603 377h1v1h-1zM603 385h1v1h-1zM603 393h1v1h-1zM603 400h1v1h-1zM603 408h1v1h-1zM603 416h1v1h-1zM603 424h1v1h-1zM603 432h1v1h-1zM603 440h1v1h-1zM603 447h1v1h-1zM603 455h1v1h-1zM603 463h1v1h-1zM785 165h1v1h-1zM785 173h1v1h-1zM785 181h1v1h-1zM785 188h1v1h-1zM785 196h1v1h-1zM785 204h1v1h-1zM785 212h1v1h-1zM785 220h1v1h-1zM785 228h1v1h-1zM785 236h1v1h-1zM785 243h1v1h-1zM785 251h1v1h-1zM785 259h1v1h-1zM785 267h1v1h-1zM785 275h1v1h-1zM785 283h1v1h-1zM785 290h1v1h-1zM785 298h1v1h-1zM785 306h1v1h-1zM785 314h1v1h-1zM785 322h1v1h-1zM785 330h1v1h-1zM785 338h1v1h-1zM785 345h1v1h-1zM785 353h1v1h-1zM785 361h1v1h-1zM785 369h1v1h-1zM785 377h1v1h-1zM785 385h1v1h-1zM785 393h1v1h-1zM785 400h1v1h-1zM785 408h1v1h-1zM785 416h1v1h-1zM785 424h1v1h-1zM785 432h1v1h-1zM785 440h1v1h-1zM785 447h1v1h-1zM785 455h1v1h-1zM785 463h1v1h-1zM877 165h1v1h-1zM877 173h1v1h-1zM877 181h1v1h-1zM877 188h1v1h-1zM877 196h1v1h-1zM877 204h1v1h-1zM877 212h1v1h-1zM877 220h1v1h-1zM877 228h1v1h-1zM877 236h1v1h-1zM877 243h1v1h-1zM877 251h1v1h-1zM877 259h1v1h-1zM877 267h1v1h-1zM877 275h1v1h-1zM877 283h1v1h-1zM877 290h1v1h-1zM877 298h1v1h-1zM877 306h1v1h-1zM877 314h1v1h-1zM877 322h1v1h-1zM877 330h1v1h-1zM877 338h1v1h-1zM877 345h1v1h-1zM877 353h1v1h-1zM877 361h1v1h-1zM877 369h1v1h-1zM877 377h1v1h-1zM877 385h1v1h-1zM877 393h1v1h-1zM877 400h1v1h-1zM877 408h1v1h-1zM877 416h1v1h-1zM877 424h1v1h-1zM877 432h1v1h-1zM877 440h1v1h-1zM877 447h1v1h-1zM877 455h1v1h-1zM877 463h1v1h-1zM968 165h1v1h-1zM968 173h1v1h-1zM968 181h1v1h-1zM968 188h1v1h-1zM968 196h1v1h-1zM968 204h1v1h-1zM968 212h1v1h-1zM968 220h1v1h-1zM968 228h1v1h-1zM968 236h1v1h-1zM968 243h1v1h-1zM968 251h1v1h-1zM968 259h1v1h-1zM968 267h1v1h-1zM968 275h1v1h-1zM968 283h1v1h-1zM968 290h1v1h-1zM968 298h1v1h-1zM968 306h1v1h-1zM968 314h1v1h-1zM968 322h1v1h-1zM968 330h1v1h-1zM968 338h1v1h-1zM968 345h1v1h-1zM968 353h1v1h-1zM968 361h1v1h-1zM968 369h1v1h-1zM968 377h1v1h-1zM968 385h1v1h-1zM968 393h1v1h-1zM968 400h1v1h-1zM968 408h1v1h-1zM968 416h1v1h-1zM968 424h1v1h-1zM968 432h1v1h-1zM968 440h1v1h-1zM968 447h1v1h-1zM968 455h1v1h-1zM968 463h1v1h-1zM1060 165h1v1h-1zM1060 173h1v1h-1zM1060 181h1v1h-1zM1060 188h1v1h-1zM1060 196h1v1h-1zM1060 204h1v1h-1zM1060 212h1v1h-1zM1060 220h1v1h-1zM1060 228h1v1h-1zM1060 236h1v1h-1zM1060 243h1v1h-1zM1060 251h1v1h-1zM1060 259h1v1h-1zM1060 267h1v1h-1zM1060 275h1v1h-1zM1060 283h1v1h-1zM1060 290h1v1h-1zM1060 298h1v1h-1zM1060 306h1v1h-1zM1060 314h1v1h-1zM1060 322h1v1h-1zM1060 330h1v1h-1zM1060 338h1v1h-1zM1060 345h1v1h-1zM1060 353h1v1h-1zM1060 361h1v1h-1zM1060 369h1v1h-1zM1060 377h1v1h-1zM1060 385h1v1h-1zM1060 393h1v1h-1zM1060 400h1v1h-1zM1060 408h1v1h-1zM1060 416h1v1h-1zM1060 424h1v1h-1zM1060 432h1v1h-1zM1060 440h1v1h-1zM1060 447h1v1h-1zM1060 455h1v1h-1zM1060 463h1v1h-1zM255 196h1v1h-1zM274 196h1v1h-1zM292 196h1v1h-1zM310 196h1v1h-1zM328 196h1v1h-1zM347 196h1v1h-1zM365 196h1v1h-1zM383 196h1v1h-1zM402 196h1v1h-1zM420 196h1v1h-1zM438 196h1v1h-1zM456 196h1v1h-1zM475 196h1v1h-1zM493 196h1v1h-1zM511 196h1v1h-1zM529 196h1v1h-1zM548 196h1v1h-1zM566 196h1v1h-1zM584 196h1v1h-1zM603 196h1v1h-1zM621 196h1v1h-1zM639 196h1v1h-1zM657 196h1v1h-1zM676 196h1v1h-1zM694 196h1v1h-1zM712 196h1v1h-1zM731 196h1v1h-1zM749 196h1v1h-1zM767 196h1v1h-1zM785 196h1v1h-1zM804 196h1v1h-1zM822 196h1v1h-1zM840 196h1v1h-1zM859 196h1v1h-1zM877 196h1v1h-1zM895 196h1v1h-1zM913 196h1v1h-1zM932 196h1v1h-1zM950 196h1v1h-1zM968 196h1v1h-1zM986 196h1v1h-1zM1005 196h1v1h-1zM1023 196h1v1h-1zM1041 196h1v1h-1zM1060 196h1v1h-1zM1078 196h1v1h-1zM1096 196h1v1h-1zM1114 196h1v1h-1zM1133 196h1v1h-1zM255 236h1v1h-1zM274 236h1v1h-1zM292 236h1v1h-1zM310 236h1v1h-1zM328 236h1v1h-1zM347 236h1v1h-1zM365 236h1v1h-1zM383 236h1v1h-1zM402 236h1v1h-1zM420 236h1v1h-1zM438 236h1v1h-1zM456 236h1v1h-1zM475 236h1v1h-1zM493 236h1v1h-1zM511 236h1v1h-1zM529 236h1v1h-1zM548 236h1v1h-1zM566 236h1v1h-1zM584 236h1v1h-1zM603 236h1v1h-1zM621 236h1v1h-1zM639 236h1v1h-1zM657 236h1v1h-1zM676 236h1v1h-1zM694 236h1v1h-1zM712 236h1v1h-1zM731 236h1v1h-1zM749 236h1v1h-1zM767 236h1v1h-1zM785 236h1v1h-1zM804 236h1v1h-1zM822 236h1v1h-1zM840 236h1v1h-1zM859 236h1v1h-1zM877 236h1v1h-1zM895 236h1v1h-1zM913 236h1v1h-1zM932 236h1v1h-1zM950 236h1v1h-1zM968 236h1v1h-1zM986 236h1v1h-1zM1005 236h1v1h-1zM1023 236h1v1h-1zM1041 236h1v1h-1zM1060 236h1v1h-1zM1078 236h1v1h-1zM1096 236h1v1h-1zM1114 236h1v1h-1zM1133 236h1v1h-1zM255 275h1v1h-1zM274 275h1v1h-1zM292 275h1v1h-1zM310 275h1v1h-1zM328 275h1v1h-1zM347 275h1v1h-1zM365 275h1v1h-1zM383 275h1v1h-1zM402 275h1v1h-1zM420 275h1v1h-1zM438 275h1v1h-1zM456 275h1v1h-1zM475 275h1v1h-1zM493 275h1v1h-1zM511 275h1v1h-1zM529 275h1v1h-1zM548 275h1v1h-1zM566 275h1v1h-1zM584 275h1v1h-1zM603 275h1v1h-1zM621 275h1v1h-1zM639 275h1v1h-1zM657 275h1v1h-1zM676 275h1v1h-1zM694 275h1v1h-1zM712 275h1v1h-1zM731 275h1v1h-1zM749 275h1v1h-1zM767 275h1v1h-1zM785 275h1v1h-1zM804 275h1v1h-1zM822 275h1v1h-1zM840 275h1v1h-1zM859 275h1v1h-1zM877 275h1v1h-1zM895 275h1v1h-1zM913 275h1v1h-1zM932 275h1v1h-1zM950 275h1v1h-1zM968 275h1v1h-1zM986 275h1v1h-1zM1005 275h1v1h-1zM1023 275h1v1h-1zM1041 275h1v1h-1zM1060 275h1v1h-1zM1078 275h1v1h-1zM1096 275h1v1h-1zM1114 275h1v1h-1zM1133 275h1v1h-1zM255 353h1v1h-1zM274 353h1v1h-1zM292 353h1v1h-1zM310 353h1v1h-1zM328 353h1v1h-1zM347 353h1v1h-1zM365 353h1v1h-1zM383 353h1v1h-1zM402 353h1v1h-1zM420 353h1v1h-1zM438 353h1v1h-1zM456 353h1v1h-1zM475 353h1v1h-1zM493 353h1v1h-1zM511 353h1v1h-1zM529 353h1v1h-1zM548 353h1v1h-1zM566 353h1v1h-1zM584 353h1v1h-1zM603 353h1v1h-1zM621 353h1v1h-1zM639 353h1v1h-1zM657 353h1v1h-1zM676 353h1v1h-1zM694 353h1v1h-1zM712 353h1v1h-1zM731 353h1v1h-1zM749 353h1v1h-1zM767 353h1v1h-1zM785 353h1v1h-1zM804 353h1v1h-1zM822 353h1v1h-1zM840 353h1v1h-1zM859 353h1v1h-1zM877 353h1v1h-1zM895 353h1v1h-1zM913 353h1v1h-1zM932 353h1v1h-1zM950 353h1v1h-1zM968 353h1v1h-1zM986 353h1v1h-1zM1005 353h1v1h-1zM1023 353h1v1h-1zM1041 353h1v1h-1zM1060 353h1v1h-1zM1078 353h1v1h-1zM1096 353h1v1h-1zM1114 353h1v1h-1zM1133 353h1v1h-1zM255 393h1v1h-1zM274 393h1v1h-1zM292 393h1v1h-1zM310 393h1v1h-1zM328 393h1v1h-1zM347 393h1v1h-1zM365 393h1v1h-1zM383 393h1v1h-1zM402 393h1v1h-1zM420 393h1v1h-1zM438 393h1v1h-1zM456 393h1v1h-1zM475 393h1v1h-1zM493 393h1v1h-1zM511 393h1v1h-1zM529 393h1v1h-1zM548 393h1v1h-1zM566 393h1v1h-1zM584 393h1v1h-1zM603 393h1v1h-1zM621 393h1v1h-1zM639 393h1v1h-1zM657 393h1v1h-1zM676 393h1v1h-1zM694 393h1v1h-1zM712 393h1v1h-1zM731 393h1v1h-1zM749 393h1v1h-1zM767 393h1v1h-1zM785 393h1v1h-1zM804 393h1v1h-1zM822 393h1v1h-1zM840 393h1v1h-1zM859 393h1v1h-1zM877 393h1v1h-1zM895 393h1v1h-1zM913 393h1v1h-1zM932 393h1v1h-1zM950 393h1v1h-1zM968 393h1v1h-1zM986 393h1v1h-1zM1005 393h1v1h-1zM1023 393h1v1h-1zM1041 393h1v1h-1zM1060 393h1v1h-1zM1078 393h1v1h-1zM1096 393h1v1h-1zM1114 393h1v1h-1zM1133 393h1v1h-1zM255 432h1v1h-1zM274 432h1v1h-1zM292 432h1v1h-1zM310 432h1v1h-1zM328 432h1v1h-1zM347 432h1v1h-1zM365 432h1v1h-1zM383 432h1v1h-1zM402 432h1v1h-1zM420 432h1v1h-1zM438 432h1v1h-1zM456 432h1v1h-1zM475 432h1v1h-1zM493 432h1v1h-1zM511 432h1v1h-1zM529 432h1v1h-1zM548 432h1v1h-1zM566 432h1v1h-1zM584 432h1v1h-1zM603 432h1v1h-1zM621 432h1v1h-1zM639 432h1v1h-1zM657 432h1v1h-1zM676 432h1v1h-1zM694 432h1v1h-1zM712 432h1v1h-1zM731 432h1v1h-1zM749 432h1v1h-1zM767 432h1v1h-1zM785 432h1v1h-1zM804 432h1v1h-1zM822 432h1v1h-1zM840 432h1v1h-1zM859 432h1v1h-1zM877 432h1v1h-1zM895 432h1v1h-1zM913 432h1v1h-1zM932 432h1v1h-1zM950 432h1v1h-1zM968 432h1v1h-1zM986 432h1v1h-1zM1005 432h1v1h-1zM1023 432h1v1h-1zM1041 432h1v1h-1zM1060 432h1v1h-1zM1078 432h1v1h-1zM1096 432h1v1h-1zM1114 432h1v1h-1zM1133 432h1v1h-1zM255 159h1v1h-1zM255 468h1v1h-1zM274 159h1v1h-1zM274 468h1v1h-1zM292 159h1v1h-1zM292 468h1v1h-1zM310 159h1v1h-1zM310 468h1v1h-1zM328 159h1v3h-1zM328 466h1v3h-1zM347 159h1v1h-1zM347 468h1v1h-1zM365 159h1v1h-1zM365 468h1v1h-1zM383 159h1v1h-1zM383 468h1v1h-1zM402 159h1v1h-1zM402 468h1v1h-1zM420 159h1v3h-1zM420 466h1v3h-1zM438 159h1v1h-1zM438 468h1v1h-1zM456 159h1v1h-1zM456 468h1v1h-1zM475 159h1v1h-1zM475 468h1v1h-1zM493 159h1v1h-1zM493 468h1v1h-1zM511 159h1v3h-1zM511 466h1v3h-1zM529 159h1v1h-1zM529 468h1v1h-1zM548 159h1v1h-1zM548 468h1v1h-1zM566 159h1v1h-1zM566 468h1v1h-1zM584 159h1v1h-1zM584 468h1v1h-1zM603 159h1v3h-1zM603 466h1v3h-1zM621 159h1v1h-1zM621 468h1v1h-1zM639 159h1v1h-1zM639 468h1v1h-1zM657 159h1v1h-1zM657 468h1v1h-1zM676 159h1v1h-1zM676 468h1v1h-1zM694 159h1v3h-1zM694 466h1v3h-1zM712 159h1v1h-1zM712 468h1v1h-1zM731 159h1v1h-1zM731 468h1v1h-1zM749 159h1v1h-1zM749 468h1v1h-1zM767 159h1v1h-1zM767 468h1v1h-1zM785 159h1v3h-1zM785 466h1v3h-1zM804 159h1v1h-1zM804 468h1v1h-1zM822 159h1v1h-1zM822 468h1v1h-1zM840 159h1v1h-1zM840 468h1v1h-1zM859 159h1v1h-1zM859 468h1v1h-1zM877 159h1v3h-1zM877 466h1v3h-1zM895 159h1v1h-1zM895 468h1v1h-1zM913 159h1v1h-1zM913 468h1v1h-1zM932 159h1v1h-1zM932 468h1v1h-1zM950 159h1v1h-1zM950 468h1v1h-1zM968 159h1v3h-1zM968 466h1v3h-1zM986 159h1v1h-1zM986 468h1v1h-1zM1005 159h1v1h-1zM1005 468h1v1h-1zM1023 159h1v1h-1zM1023 468h1v1h-1zM1041 159h1v1h-1zM1041 468h1v1h-1zM1060 159h1v3h-1zM1060 466h1v3h-1zM1078 159h1v1h-1zM1078 468h1v1h-1zM1096 159h1v1h-1zM1096 468h1v1h-1zM1114 159h1v1h-1zM1114 468h1v1h-1zM1133 159h1v1h-1zM1133 468h1v1h-1zM239 165h1v1h-1zM1149 165h1v1h-1zM239 173h1v1h-1zM1149 173h1v1h-1zM239 181h1v1h-1zM1149 181h1v1h-1zM239 188h1v1h-1zM1149 188h1v1h-1zM239 196h3v1h-3zM1147 196h3v1h-3zM239 204h1v1h-1zM1149 204h1v1h-1zM239 212h1v1h-1zM1149 212h1v1h-1zM239 220h1v1h-1zM1149 220h1v1h-1zM239 228h1v1h-1zM1149 228h1v1h-1zM239 236h3v1h-3zM1147 236h3v1h-3zM239 243h1v1h-1zM1149 243h1v1h-1zM239 251h1v1h-1zM1149 251h1v1h-1zM239 259h1v1h-1zM1149 259h1v1h-1zM239 267h1v1h-1zM1149 267h1v1h-1zM239 275h3v1h-3zM1147 275h3v1h-3zM239 283h1v1h-1zM1149 283h1v1h-1zM239 290h1v1h-1zM1149 290h1v1h-1zM239 298h1v1h-1zM1149 298h1v1h-1zM239 306h1v1h-1zM1149 306h1v1h-1zM239 314h3v1h-3zM1147 314h3v1h-3zM239 322h1v1h-1zM1149 322h1v1h-1zM239 330h1v1h-1zM1149 330h1v1h-1zM239 338h1v1h-1zM1149 338h1v1h-1zM239 345h1v1h-1zM1149 345h1v1h-1zM239 353h3v1h-3zM1147 353h3v1h-3zM239 361h1v1h-1zM1149 361h1v1h-1zM239 369h1v1h-1zM1149 369h1v1h-1zM239 377h1v1h-1zM1149 377h1v1h-1zM239 385h1v1h-1zM1149 385h1v1h-1zM239 393h3v1h-3zM1147 393h3v1h-3zM239 400h1v1h-1zM1149 400h1v1h-1zM239 408h1v1h-1zM1149 408h1v1h-1zM239 416h1v1h-1zM1149 416h1v1h-1zM239 424h1v1h-1zM1149 424h1v1h-1zM239 432h3v1h-3zM1147 432h3v1h-3zM239 440h1v1h-1zM1149 440h1v1h-1zM239 447h1v1h-1zM1149 447h1v1h-1zM239 455h1v1h-1zM1149 455h1v1h-1zM239 463h1v1h-1zM1149 463h1v1h-1z" fill="#c8c8c8"/><path d="M239 314h911v1h-911z M694 159h1v310h-1zM255 311h1v7h-1zM274 311h1v7h-1zM292 311h1v7h-1zM310 311h1v7h-1zM328 311h1v7h-1zM347 311h1v7h-1zM365 311h1v7h-1zM383 311h1v7h-1zM402 311h1v7h-1zM420 311h1v7h-1zM438 311h1v7h-1zM456 311h1v7h-1zM475 311h1v7h-1zM493 311h1v7h-1zM511 311h1v7h-1zM529 311h1v7h-1zM548 311h1v7h-1zM566 311h1v7h-1zM584 311h1v7h-1zM603 311h1v7h-1zM621 311h1v7h-1zM639 311h1v7h-1zM657 311h1v7h-1zM676 311h1v7h-1zM694 311h1v7h-1zM712 311h1v7h-1zM731 311h1v7h-1zM749 311h1v7h-1zM767 311h1v7h-1zM785 311h1v7h-1zM804 311h1v7h-1zM822 311h1v7h-1zM840 311h1v7h-1zM859 311h1v7h-1zM877 311h1v7h-1zM895 311h1v7h-1zM913 311h1v7h-1zM932 311h1v7h-1zM950 311h1v7h-1zM968 311h1v7h-1zM986 311h1v7h-1zM1005 311h1v7h-1zM1023 311h1v7h-1zM1041 311h1v7h-1zM1060 311h1v7h-1zM1078 311h1v7h-1zM1096 311h1v7h-1zM1114 311h1v7h-1zM1133 311h1v7h-1zM691 165h7v1h-7zM691 173h7v1h-7zM691 181h7v1h-7zM691 188h7v1h-7zM691 196h7v1h-7zM691 204h7v1h-7zM691 212h7v1h-7zM691 220h7v1h-7zM691 228h7v1h-7zM691 236h7v1h-7zM691 243h7v1h-7zM691 251h7v1h-7zM691 259h7v1h-7zM691 267h7v1h-7zM691 275h7v1h-7zM691 283h7v1h-7zM691 290h7v1h-7zM691 298h7v1h-7zM691 306h7v1h-7zM691 314h7v1h-7zM691 322h7v1h-7zM691 330h7v1h-7zM691 338h7v1h-7zM691 345h7v1h-7zM691 353h7v1h-7zM691 361h7v1h-7zM691 369h7v1h-7zM691 377h7v1h-7zM691 385h7v1h-7zM691 393h7v1h-7zM691 400h7v1h-7zM691 408h7v1h-7zM691 416h7v1h-7zM691 424h7v1h-7zM691 432h7v1h-7zM691 440h7v1h-7zM691 447h7v1h-7zM691 455h7v1h-7zM691 463h7v1h-7z" fill="#c8c8c8"/><path d="M239 273h54v1h-54zM310 273h283v1h-283zM610 273h282v1h-282zM909 273h241v1h-241zM239 274h4v3h-4zM244 274h3v3h-3zM248 274h11v3h-11zM260 274h2v3h-2zM263 274h1v3h-1zM265 274h2v3h-2zM268 274h2v3h-2zM271 274h3v3h-3zM275 274h7v3h-7zM283 274h6v3h-6zM291 274h2v3h-2zM312 274h1v3h-1zM316 274h2v3h-2zM319 274h1v3h-1zM321 274h1v3h-1zM329 274h1v3h-1zM331 274h1v3h-1zM335 274h14v3h-14zM350 274h1v3h-1zM352 274h1v3h-1zM354 274h2v3h-2zM357 274h2v3h-2zM362 274h1v3h-1zM365 274h3v3h-3zM369 274h4v3h-4zM376 274h2v3h-2zM379 274h2v3h-2zM382 274h3v3h-3zM386 274h1v3h-1zM390 274h2v3h-2zM393 274h2v3h-2zM396 274h5v3h-5zM402 274h6v3h-6zM409 274h3v3h-3zM414 274h6v3h-6zM422 274h1v3h-1zM424 274h1v3h-1zM427 274h1v3h-1zM429 274h7v3h-7zM438 274h5v3h-5zM444 274h4v3h-4zM449 274h1v3h-1zM452 274h1v3h-1zM454 274h3v3h-3zM458 274h3v3h-3zM462 274h2v3h-2zM465 274h1v3h-1zM467 274h4v3h-4zM472 274h8v3h-8zM481 274h1v3h-1zM483 274h6v3h-6zM490 274h1v3h-1zM493 274h1v3h-1zM495 274h1v3h-1zM499 274h2v3h-2zM502 274h14v3h-14zM518 274h1v3h-1zM520 274h7v3h-7zM528 274h1v3h-1zM530 274h1v3h-1zM532 274h10v3h-10zM543 274h1v3h-1zM545 274h4v3h-4zM550 274h1v3h-1zM552 274h5v3h-5zM558 274h10v3h-10zM569 274h4v3h-4zM574 274h2v3h-2zM577 274h5v3h-5zM583 274h1v3h-1zM585 274h5v3h-5zM591 274h2v3h-2zM612 274h1v3h-1zM614 274h3v3h-3zM620 274h2v3h-2zM623 274h1v3h-1zM629 274h1v3h-1zM632 274h4v3h-4zM638 274h2v3h-2zM641 274h2v3h-2zM649 274h2v3h-2zM652 274h1v3h-1zM657 274h1v3h-1zM659 274h2v3h-2zM663 274h1v3h-1zM666 274h3v3h-3zM670 274h1v3h-1zM672 274h3v3h-3zM676 274h1v3h-1zM679 274h2v3h-2zM686 274h2v3h-2zM689 274h2v3h-2zM692 274h10v3h-10zM703 274h1v3h-1zM705 274h1v3h-1zM707 274h6v3h-6zM717 274h2v3h-2zM720 274h3v3h-3zM725 274h1v3h-1zM727 274h3v3h-3zM732 274h2v3h-2zM735 274h7v3h-7zM743 274h4v3h-4zM748 274h3v3h-3zM753 274h3v3h-3zM757 274h4v3h-4zM762 274h3v3h-3zM767 274h10v3h-10zM780 274h4v3h-4zM785 274h4v3h-4zM790 274h11v3h-11zM804 274h3v3h-3zM808 274h4v3h-4zM813 274h2v3h-2zM816 274h6v3h-6zM823 274h12v3h-12zM836 274h9v3h-9zM846 274h2v3h-2zM849 274h1v3h-1zM851 274h4v3h-4zM856 274h3v3h-3zM860 274h1v3h-1zM862 274h6v3h-6zM869 274h1v3h-1zM871 274h8v3h-8zM880 274h3v3h-3zM884 274h1v3h-1zM886 274h3v3h-3zM890 274h2v3h-2zM917 274h2v3h-2zM926 274h1v3h-1zM929 274h4v3h-4zM935 274h1v3h-1zM937 274h1v3h-1zM939 274h5v3h-5zM945 274h2v3h-2zM948 274h2v3h-2zM951 274h2v3h-2zM954 274h1v3h-1zM958 274h4v3h-4zM964 274h1v3h-1zM967 274h9v3h-9zM977 274h4v3h-4zM982 274h1v3h-1zM984 274h5v3h-5zM990 274h5v3h-5zM996 274h1v3h-1zM998 274h4v3h-4zM1004 274h6v3h-6zM1011 274h3v3h-3zM1015 274h2v3h-2zM1018 274h1v3h-1zM1020 274h9v3h-9zM1031 274h4v3h-4zM1036 274h3v3h-3zM1042 274h10v3h-10zM1053 274h10v3h-10zM1064 274h2v3h-2zM1067 274h4v3h-4zM1072 274h3v3h-3zM1076 274h1v3h-1zM1078 274h1v3h-1zM1080 274h3v3h-3zM1084 274h11v3h-11zM1097 274h4v3h-4zM1102 274h1v3h-1zM1104 274h4v3h-4zM1109 274h16v3h-16zM1126 274h2v3h-2zM1129 274h14v3h-14zM1144 274h6v3h-6zM247 274h1v1h-1zM262 274h1v1h-1zM267 274h1v1h-1zM270 274h1v1h-1zM274 274h1v1h-1zM289 274h1v1h-1zM310 274h2v1h-2zM313 274h1v1h-1zM315 274h1v1h-1zM320 274h1v1h-1zM322 274h1v1h-1zM330 274h1v1h-1zM333 274h1v1h-1zM349 274h1v1h-1zM359 274h1v1h-1zM363 274h2v1h-2zM373 274h1v1h-1zM385 274h1v1h-1zM388 274h1v1h-1zM421 274h1v1h-1zM423 274h1v1h-1zM425 274h2v1h-2zM437 274h1v1h-1zM448 274h1v1h-1zM450 274h2v1h-2zM457 274h1v1h-1zM464 274h1v1h-1zM498 274h1v1h-1zM517 274h1v1h-1zM531 274h1v1h-1zM557 274h1v1h-1zM584 274h1v1h-1zM617 274h1v1h-1zM622 274h1v1h-1zM625 274h1v1h-1zM630 274h1v1h-1zM645 274h1v1h-1zM653 274h1v1h-1zM656 274h1v1h-1zM658 274h1v1h-1zM662 274h1v1h-1zM664 274h2v1h-2zM671 274h1v1h-1zM681 274h2v1h-2zM684 274h1v1h-1zM704 274h1v1h-1zM706 274h1v1h-1zM713 274h1v1h-1zM724 274h1v1h-1zM731 274h1v1h-1zM734 274h1v1h-1zM742 274h1v1h-1zM752 274h1v1h-1zM761 274h1v1h-1zM777 274h2v1h-2zM789 274h1v1h-1zM812 274h1v1h-1zM815 274h1v1h-1zM822 274h1v1h-1zM855 274h1v1h-1zM861 274h1v1h-1zM879 274h1v1h-1zM919 274h1v1h-1zM922 274h1v1h-1zM924 274h1v1h-1zM928 274h1v1h-1zM933 274h1v1h-1zM936 274h1v1h-1zM944 274h1v1h-1zM955 274h1v1h-1zM966 274h1v1h-1zM976 274h1v1h-1zM989 274h1v1h-1zM1010 274h1v1h-1zM1014 274h1v1h-1zM1019 274h1v1h-1zM1030 274h1v1h-1zM1035 274h1v1h-1zM1041 274h1v1h-1zM1063 274h1v1h-1zM1075 274h1v1h-1zM1125 274h1v1h-1zM1143 274h1v1h-1z" fill="#e0e000"/><path d="M292.5 273.5 L293.5 273.5 L293.5 259.5 L294.5 259.5 L294.5 247.5 L295.5 247.5 L295.5 246.5 L296.5 245.5 L297.5 244.5 L297.5 243.5 L298.5 242.5 L299.5 241.5 L300.5 241.5 L301.5 240.5 L303.5 240.5 L304.5 239.5 L308.5 239.5 L309.5 240.5 L309.5 272.5 L310.5 273.5 L313.5 273.5M592.5 273.5 L593.5 273.5 L593.5 259.5 L594.5 259.5 L594.5 247.5 L595.5 247.5 L595.5 246.5 L596.5 245.5 L597.5 244.5 L597.5 243.5 L598.5 242.5 L599.5 241.5 L600.5 241.5 L601.5 240.5 L603.5 240.5 L604.5 239.5 L608.5 239.5 L609.5 240.5 L609.5 272.5 L610.5 273.5 L613.5 273.5M891.5 273.5 L892.5 273.5 L892.5 259.5 L893.5 259.5 L893.5 247.5 L894.5 247.5 L894.5 246.5 L895.5 245.5 L896.5 244.5 L896.5 243.5 L897.5 242.5 L898.5 241.5 L899.5 241.5 L900.5 240.5 L902.5 240.5 L903.5 239.5 L907.5 239.5 L908.5 240.5 L908.5 272.5 L909.5 273.5 L912.5 273.5" stroke="#e6e600" stroke-width="1" fill="none"/><rect x="306" y="237" width="3" height="3" fill="#e6e600"/><rect x="295" y="246" width="2" height="2" fill="#e6e600"/><rect x="297" y="243" width="2" height="2" fill="#e6e600"/><rect x="606" y="237" width="3" height="3" fill="#e6e600"/><rect x="595" y="246" width="2" height="2" fill="#e6e600"/><rect x="597" y="243" width="2" height="2" fill="#e6e600"/><rect x="905" y="237" width="3" height="3" fill="#e6e600"/><rect x="894" y="246" width="2" height="2" fill="#e6e600"/><rect x="896" y="243" width="2" height="2" fill="#e6e600"/><path d="M239 431h15V435h-15zM254 433h1V435h-1zM255 431h2V435h-2zM257 433h1V435h-1zM258 431h3V435h-3zM261 433h1V435h-1zM262 431h1V435h-1zM263 432h1V435h-1zM264 431h4V435h-4zM268 433h1V435h-1zM269 431h2V435h-2zM271 433h1V435h-1zM272 431h5V435h-5zM277 432h1V435h-1zM278 431h1V435h-1zM279 432h1V435h-1zM280 431h1V435h-1zM281 433h1V435h-1zM282 432h1V435h-1zM283 431h8V435h-8zM291 432h1V435h-1zM292 431h1V435h-1zM293 433h1V435h-1zM294 431h4V435h-4zM298 433h1V435h-1zM299 431h10V435h-10zM315 431h5V435h-5zM320 433h1V435h-1zM321 431h5V435h-5zM326 432h1V435h-1zM327 431h5V435h-5zM332 433h1V435h-1zM333 431h3V435h-3zM336 432h1V435h-1zM337 431h7V435h-7zM344 433h1V435h-1zM345 431h1V435h-1zM346 433h2V435h-2zM348 431h2V435h-2zM350 432h2V435h-2zM352 431h7V435h-7zM359 433h1V435h-1zM360 431h1V435h-1zM361 432h2V435h-2zM363 431h7V435h-7zM370 433h2V435h-2zM372 431h2V435h-2zM374 433h1V435h-1zM375 431h1V435h-1zM376 433h2V435h-2zM378 431h4V435h-4zM382 432h1V435h-1zM383 431h4V435h-4zM387 432h1V435h-1zM388 431h7V435h-7zM395 432h1V435h-1zM396 431h5V435h-5zM401 432h1V435h-1zM402 433h1V435h-1zM403 431h2V435h-2zM405 432h1V435h-1zM406 431h5V435h-5zM411 432h1V435h-1zM412 431h5V435h-5zM417 433h1V435h-1zM418 431h8V435h-8zM426 432h1V435h-1zM427 433h1V435h-1zM428 431h3V435h-3zM431 432h1V435h-1zM432 431h5V435h-5zM437 433h1V435h-1zM438 431h2V435h-2zM440 433h1V435h-1zM441 431h8V435h-8zM449 432h1V435h-1zM450 431h1V435h-1zM451 433h1V435h-1zM452 431h17V435h-17zM469 433h1V435h-1zM470 431h2V435h-2zM472 433h1V435h-1zM473 431h6V435h-6zM479 433h1V435h-1zM480 431h1V435h-1zM481 432h1V435h-1zM482 431h1V435h-1zM483 432h1V435h-1zM484 431h1V435h-1zM485 433h1V435h-1zM486 431h2V435h-2zM488 432h1V435h-1zM489 431h2V435h-2zM491 432h2V435h-2zM493 431h12V435h-12zM505 433h1V435h-1zM506 431h6V435h-6zM512 432h1V435h-1zM513 431h1V435h-1zM514 433h1V435h-1zM515 431h3V435h-3zM518 433h1V435h-1zM519 431h6V435h-6zM525 432h1V435h-1zM526 431h2V435h-2zM528 433h1V435h-1zM529 431h1V435h-1zM530 433h2V435h-2zM532 431h3V435h-3zM535 432h1V435h-1zM536 433h1V435h-1zM537 431h29V435h-29zM566 433h1V435h-1zM567 432h1V435h-1zM568 431h5V435h-5zM573 433h1V435h-1zM574 431h2V435h-2zM576 432h1V435h-1zM577 431h2V435h-2zM579 432h2V435h-2zM581 431h10V435h-10zM591 432h1V435h-1zM592 431h7V435h-7zM599 432h1V435h-1zM600 431h1V435h-1zM601 433h1V435h-1zM602 431h5V435h-5zM607 432h2V435h-2zM615 431h1V435h-1zM616 433h1V435h-1zM617 431h8V435h-8zM625 433h2V435h-2zM627 431h2V435h-2zM629 433h2V435h-2zM631 431h11V435h-11zM642 433h1V435h-1zM643 431h5V435h-5zM648 433h1V435h-1zM649 432h1V435h-1zM650 431h2V435h-2zM652 433h1V435h-1zM653 431h1V435h-1zM654 433h1V435h-1zM655 431h13V435h-13zM668 433h1V435h-1zM669 431h4V435h-4zM673 432h1V435h-1zM674 431h7V435h-7zM681 432h1V435h-1zM682 431h2V435h-2zM684 433h1V435h-1zM685 431h23V435h-23zM708 433h1V435h-1zM709 431h7V435h-7zM716 432h1V435h-1zM717 431h1V435h-1zM718 432h1V435h-1zM719 431h2V435h-2zM721 433h1V435h-1zM722 431h12V435h-12zM734 432h2V435h-2zM736 431h12V435h-12zM748 432h1V435h-1zM749 431h16V435h-16zM765 433h1V435h-1zM766 431h3V435h-3zM769 432h1V435h-1zM770 431h8V435h-8zM778 432h1V435h-1zM779 431h3V435h-3zM782 432h1V435h-1zM783 431h6V435h-6zM789 433h1V435h-1zM790 431h2V435h-2zM792 433h1V435h-1zM793 431h16V435h-16zM809 433h1V435h-1zM810 431h3V435h-3zM813 433h1V435h-1zM814 431h4V435h-4zM818 432h1V435h-1zM819 431h3V435h-3zM822 433h1V435h-1zM823 431h6V435h-6zM829 432h1V435h-1zM830 431h4V435h-4zM834 433h1V435h-1zM835 431h3V435h-3zM838 433h1V435h-1zM839 431h1V435h-1zM840 432h2V435h-2zM842 431h1V435h-1zM843 432h1V435h-1zM844 431h3V435h-3zM847 433h1V435h-1zM848 431h7V435h-7zM855 432h1V435h-1zM856 433h1V435h-1zM857 431h1V435h-1zM858 432h1V435h-1zM859 431h2V435h-2zM861 432h1V435h-1zM862 431h3V435h-3zM865 433h1V435h-1zM866 431h6V435h-6zM872 433h3V435h-3zM875 432h1V435h-1zM876 431h2V435h-2zM878 433h1V435h-1zM879 431h11V435h-11zM890 433h1V435h-1zM891 431h1V435h-1zM892 433h1V435h-1zM893 431h5V435h-5zM898 433h1V435h-1zM899 431h3V435h-3zM902 432h1V435h-1zM903 433h1V435h-1zM904 431h5V435h-5zM915 431h6V435h-6zM921 432h1V435h-1zM922 431h3V435h-3zM925 432h1V435h-1zM926 433h1V435h-1zM927 432h1V435h-1zM928 431h6V435h-6zM934 432h3V435h-3zM937 431h1V435h-1zM938 433h1V435h-1zM939 431h8V435h-8zM947 433h2V435h-2zM949 431h4V435h-4zM953 432h1V435h-1zM954 431h5V435h-5zM959 433h1V435h-1zM960 431h4V435h-4zM964 433h1V435h-1zM965 431h10V435h-10zM975 433h1V435h-1zM976 432h1V435h-1zM977 431h1V435h-1zM978 433h3V435h-3zM981 431h2V435h-2zM983 433h1V435h-1zM984 431h15V435h-15zM999 432h1V435h-1zM1000 433h1V435h-1zM1001 431h27V435h-27zM1028 432h1V435h-1zM1029 431h2V435h-2zM1031 433h2V435h-2zM1033 431h1V435h-1zM1034 433h1V435h-1zM1035 432h1V435h-1zM1036 431h9V435h-9zM1045 432h1V435h-1zM1046 431h2V435h-2zM1048 432h1V435h-1zM1049 431h8V435h-8zM1057 433h1V435h-1zM1058 431h11V435h-11zM1069 433h1V435h-1zM1070 431h4V435h-4zM1074 432h1V435h-1zM1075 431h1V435h-1zM1076 433h1V435h-1zM1077 431h8V435h-8zM1085 432h1V435h-1zM1086 431h5V435h-5zM1091 432h1V435h-1zM1092 431h11V435h-11zM1103 432h1V435h-1zM1104 433h1V435h-1zM1105 431h1V435h-1zM1106 433h2V435h-2zM1108 431h6V435h-6zM1114 433h1V435h-1zM1115 431h1V435h-1zM1116 432h1V435h-1zM1117 433h1V435h-1zM1118 431h4V435h-4zM1122 433h1V435h-1zM1123 432h1V435h-1zM1124 431h2V435h-2zM1126 432h1V435h-1zM1127 431h5V435h-5zM1132 432h1V435h-1zM1133 431h1V435h-1zM1134 433h1V435h-1zM1135 431h8V435h-8zM1143 433h1V435h-1zM1144 431h1V435h-1zM1145 432h1V435h-1zM1146 431h3V435h-3zM1149 432h1V435h-1z" fill="#00e000"/><path d="M309.5 433.5 L309.5 405.5 L310.5 405.5 L310.5 396.5 L311.5 393.5 L312.5 393.5 L312.5 431.5 L315.5 431.5M609.5 433.5 L609.5 405.5 L610.5 405.5 L610.5 396.5 L611.5 393.5 L612.5 393.5 L612.5 431.5 L615.5 431.5M909.5 433.5 L909.5 405.5 L910.5 405.5 L910.5 396.5 L911.5 393.5 L912.5 393.5 L912.5 431.5 L915.5 431.5" stroke="#00e600" stroke-width="1" fill="none" shape-rendering="crispEdges"/></svg>
<svg class="ab" style="left:217px;top:230px" width="20" height="14" viewBox="0 0 20 14"><path d="M1 1h12l5.5 6-5.5 6H1z" fill="#ffff00" stroke="#1a1a40" stroke-width="0.8" stroke-dasharray="1 1"/><text x="6" y="11.5" font-family="Liberation Sans" font-weight="700" font-size="12" fill="#000">1</text></svg>
<svg class="ab" style="left:217px;top:386px" width="20" height="14" viewBox="0 0 20 14"><path d="M1 1h12l5.5 6-5.5 6H1z" fill="#00ff00" stroke="#1a401a" stroke-width="0.8" stroke-dasharray="1 1"/><text x="5.5" y="11.5" font-family="Liberation Sans" font-weight="700" font-size="12" fill="#000">2</text></svg>
<svg class="ab" style="left:1152px;top:249px" width="20" height="13" viewBox="0 0 20 13"><path d="M19 0.5H6L1 6.5l5 6h13z" fill="#ffff00" stroke="#1a1a40" stroke-width="0.8" stroke-dasharray="1 1"/><text x="8" y="10.5" font-family="Liberation Sans" font-size="11" fill="#000">T</text></svg>
<div class="ab" style="left:237px;top:475px;width:92px;height:19px;background:#000"></div>
<div class="t" style="left:240px;top:479px;font-size:12px;color:#f0f000">CH1</div>
<svg class="ab" style="left:266px;top:482px" width="12" height="7" viewBox="0 0 12 7"><path d="M1 1h1v1H1zM4 1h1v1H4zM7 1h1v1H7zM10 1h1v1h-1zM1 5h10v1H1z" fill="#f0f000"/></svg>
<div class="t" style="left:287px;top:479px;font-size:12px;color:#f0f000">5.00V</div>
<div class="ab" style="left:377px;top:475px;width:92px;height:19px;background:#000"></div>
<div class="t" style="left:379px;top:479px;font-size:12px;color:#00ff00">CH2</div>
<svg class="ab" style="left:406px;top:482px" width="12" height="7" viewBox="0 0 12 7"><path d="M1 1h1v1H1zM4 1h1v1H4zM7 1h1v1H7zM10 1h1v1h-1zM1 5h10v1H1z" fill="#00ff00"/></svg>
<div class="t" style="left:427px;top:479px;font-size:12px;color:#00ff00">5.00V</div>
<div class="ab" style="left:942px;top:475px;width:209px;height:19px;background:#000"></div>
<div class="t" style="left:945px;top:479px;font-size:12px;color:#ff9000">Time: 500.0us</div>
<div class="t" style="left:1042px;top:479px;font-size:12px;color:#ff9000">Sample Rate: 1MHz</div>
<div class="ab" style="left:1178px;top:81px;width:188px;height:426px;background:#eef2f9"></div>
<div class="ab" style="left:1182px;top:81px;width:184px;height:20px;background:linear-gradient(#95b3d6,#bcd3ea)"></div>
<div class="t" style="left:1186px;top:85px;font-size:12px">Control Panel</div>
<svg class="ab" style="left:1334px;top:86px" width="10" height="10" viewBox="0 0 10 10"><path d="M3 0.5h4v5H3zM1.5 6h7M5 6v3.5" stroke="#000" stroke-width="1.4" fill="none"/><rect x="3" y="1" width="2" height="4.5" fill="#000"/></svg>
<svg class="ab" style="left:1350px;top:85px" width="12" height="12" viewBox="0 0 12 12"><path d="M2 2.5l7.5 6.5M9.5 2.5l-7.5 6.5" stroke="#000" stroke-width="1.9"/></svg>
<div class="ab" style="left:1182px;top:101px;width:184px;height:22px;background:#e1e1e1;border:1px solid #adadad"></div>
<div class="t" style="left:1186px;top:107px;font-size:12px;color:#000">Scope</div>
<svg class="ab" style="left:1352px;top:109px" width="10" height="6" viewBox="0 0 10 6"><path d="M0.5 0.5l4.5 4.5 4.5-4.5" stroke="#444" stroke-width="1.1" fill="none"/></svg>
<div class="ab" style="left:1182px;top:123px;width:184px;height:25px;background:linear-gradient(#f3f6fb 0%,#eef1f7 25%,#cfd1dd 70%,#b6b9c9 100%)"></div>
<div class="ab" style="left:1182px;top:148px;width:184px;height:338px;background:#f0f0f0"></div>
<div class="ab" style="left:1187px;top:148px;width:162px;height:8px;border-left:1px solid #dcdcdc;border-bottom:1px solid #dcdcdc"></div>
<div class="ab" style="left:1187px;top:175px;width:170px;height:284px;border:1px solid #dcdcdc;border-right:none"></div>
<div class="ab" style="left:1269px;top:169px;width:40px;height:12px;background:#f0f0f0"></div>
<div class="t" style="left:1271px;top:170px;font-size:11px;color:#000">Vertical</div>
<div class="ab" style="left:1187px;top:478px;width:170px;height:10px;border-left:1px solid #dcdcdc;border-top:1px solid #dcdcdc"></div>
<div class="ab" style="left:1269px;top:472px;width:40px;height:12px;background:#f0f0f0"></div>
<div class="t" style="left:1272px;top:473px;font-size:11px;color:#000">Trigger</div>
<div class="ab" style="left:1196px;top:192px;width:13px;height:13px;border:1px solid #333;background:#fff"></div>
<svg class="ab" style="left:1196px;top:192px" width="13" height="13" viewBox="0 0 13 13"><path d="M2.5 6.5l3 3 5.5-6.5" stroke="#333" stroke-width="1.2" fill="none"/></svg>
<div class="t" style="left:1212px;top:194px;font-size:11px">CH1</div>
<div class="ab" style="left:1196px;top:213px;width:74px;height:22px;background:#e1e1e1;border:1px solid #adadad"></div>
<div class="t" style="left:1200px;top:219px;font-size:11px;color:#000">5.00V</div>
<svg class="ab" style="left:1256px;top:221px" width="10" height="6" viewBox="0 0 10 6"><path d="M0.5 0.5l4.5 4.5 4.5-4.5" stroke="#444" stroke-width="1.1" fill="none"/></svg>
<div class="ab" style="left:1196px;top:248px;width:74px;height:22px;background:#cccccc;border:1px solid #bfbfbf"></div>
<div class="t" style="left:1200px;top:254px;font-size:11px;color:#838383">DC</div>
<svg class="ab" style="left:1256px;top:256px" width="10" height="6" viewBox="0 0 10 6"><path d="M0.5 0.5l4.5 4.5 4.5-4.5" stroke="#b0b0b0" stroke-width="1.1" fill="none"/></svg>
<div class="ab" style="left:1196px;top:283px;width:74px;height:22px;background:#e1e1e1;border:1px solid #adadad"></div>
<div class="t" style="left:1200px;top:289px;font-size:11px;color:#000">x10</div>
<svg class="ab" style="left:1256px;top:291px" width="10" height="6" viewBox="0 0 10 6"><path d="M0.5 0.5l4.5 4.5 4.5-4.5" stroke="#444" stroke-width="1.1" fill="none"/></svg>
<svg class="ab" style="left:1286px;top:193.5px" width="64" height="90" viewBox="1286 193.5 64 90">
<path d="M1304.90 263.60 A35.5 35.5 0 1 1 1363.36 250.64" stroke="#fff" stroke-width="2.5" fill="none"/>
<path d="M1304.33 264.17 A36.3 36.3 0 1 1 1364.11 250.92" stroke="#000" stroke-width="1" fill="none"/>
<circle cx="1330" cy="238.5" r="33.6" fill="#c4c4c4" stroke="#000" stroke-width="1"/>
<circle cx="1330" cy="238.5" r="27.5" fill="#ffff00" stroke="#000" stroke-width="1"/>
<path d="M1324.5 215.5 L1328.5 233.0" stroke="#e4e4e4" stroke-width="1.4"/>
<path d="M1299 268.7 L1310 258.7" stroke="#000" stroke-width="1.3"/>
</svg>
<div class="ab" style="left:1307px;top:290px;width:13px;height:13px;border:1px solid #333;background:#fff"></div>
<div class="ab" style="left:1322px;top:290px;width:27px;height:16px;overflow:hidden"><div class="t" style="left:1px;top:2px;font-size:11px">Invert</div></div>
<div class="ab" style="left:1196px;top:332px;width:13px;height:13px;border:1px solid #333;background:#fff"></div>
<svg class="ab" style="left:1196px;top:332px" width="13" height="13" viewBox="0 0 13 13"><path d="M2.5 6.5l3 3 5.5-6.5" stroke="#333" stroke-width="1.2" fill="none"/></svg>
<div class="t" style="left:1212px;top:334px;font-size:11px">CH2</div>
<div class="ab" style="left:1196px;top:353px;width:74px;height:22px;background:#e1e1e1;border:1px solid #adadad"></div>
<div class="t" style="left:1200px;top:359px;font-size:11px;color:#000">5.00V</div>
<svg class="ab" style="left:1256px;top:361px" width="10" height="6" viewBox="0 0 10 6"><path d="M0.5 0.5l4.5 4.5 4.5-4.5" stroke="#444" stroke-width="1.1" fill="none"/></svg>
<div class="ab" style="left:1196px;top:388px;width:74px;height:22px;background:#cccccc;border:1px solid #bfbfbf"></div>
<div class="t" style="left:1200px;top:394px;font-size:11px;color:#838383">DC</div>
<svg class="ab" style="left:1256px;top:396px" width="10" height="6" viewBox="0 0 10 6"><path d="M0.5 0.5l4.5 4.5 4.5-4.5" stroke="#b0b0b0" stroke-width="1.1" fill="none"/></svg>
<div class="ab" style="left:1196px;top:423px;width:74px;height:22px;background:#e1e1e1;border:1px solid #adadad"></div>
<div class="t" style="left:1200px;top:429px;font-size:11px;color:#000">x10</div>
<svg class="ab" style="left:1256px;top:431px" width="10" height="6" viewBox="0 0 10 6"><path d="M0.5 0.5l4.5 4.5 4.5-4.5" stroke="#444" stroke-width="1.1" fill="none"/></svg>
<svg class="ab" style="left:1286px;top:335.0px" width="64" height="90" viewBox="1286 335.0 64 90">
<path d="M1304.90 405.10 A35.5 35.5 0 1 1 1363.36 392.14" stroke="#fff" stroke-width="2.5" fill="none"/>
<path d="M1304.33 405.67 A36.3 36.3 0 1 1 1364.11 392.42" stroke="#000" stroke-width="1" fill="none"/>
<circle cx="1330" cy="380.0" r="33.6" fill="#c4c4c4" stroke="#000" stroke-width="1"/>
<circle cx="1330" cy="380.0" r="27.5" fill="#00ff00" stroke="#000" stroke-width="1"/>
<path d="M1324.5 357.0 L1328.5 374.5" stroke="#e4e4e4" stroke-width="1.4"/>
<path d="M1299 410.2 L1310 400.2" stroke="#000" stroke-width="1.3"/>
</svg>
<div class="ab" style="left:1307px;top:430px;width:13px;height:13px;border:1px solid #333;background:#fff"></div>
<div class="ab" style="left:1322px;top:430px;width:27px;height:16px;overflow:hidden"><div class="t" style="left:1px;top:2px;font-size:11px">Invert</div></div>
<div class="ab" style="left:1349px;top:148px;width:17px;height:338px;background:#f0f0f0;border-left:1px solid #fafafa"></div>
<div class="ab" style="left:1350px;top:213px;width:15px;height:132px;background:#cdcdcd"></div>
<svg class="ab" style="left:1352px;top:153px" width="10" height="8" viewBox="0 0 10 8"><path d="M1 6l4-4 4 4" stroke="#606060" stroke-width="2" fill="none"/></svg>
<svg class="ab" style="left:1352px;top:473px" width="10" height="8" viewBox="0 0 10 8"><path d="M1 2l4 4 4-4" stroke="#606060" stroke-width="2" fill="none"/></svg>
<div class="ab" style="left:1182px;top:486px;width:184px;height:17px;background:#f0f0f0"></div>
<div class="ab" style="left:1199px;top:487px;width:103px;height:15px;background:#cdcdcd"></div>
<svg class="ab" style="left:1186px;top:490px" width="8" height="10" viewBox="0 0 8 10"><path d="M6 1l-4 4 4 4" stroke="#606060" stroke-width="2" fill="none"/></svg>
<svg class="ab" style="left:1336px;top:490px" width="8" height="10" viewBox="0 0 8 10"><path d="M2 1l4 4-4 4" stroke="#606060" stroke-width="2" fill="none"/></svg>
<div class="ab" style="left:1178px;top:81px;width:1px;height:422px;background:#a8a8a8"></div>
<div class="ab" style="left:210px;top:503px;width:1156px;height:4px;background:#eef1f9"></div>
<div class="ab" style="left:210px;top:507px;width:1156px;height:19px;background:linear-gradient(#c2d0de,#dae5f1)"></div>
<div class="t" style="left:215px;top:511px;font-size:12px">Output</div>
<svg class="ab" style="left:1334px;top:512px" width="10" height="10" viewBox="0 0 10 10"><path d="M3 0.5h4v5H3zM1.5 6h7M5 6v3.5" stroke="#000" stroke-width="1.4" fill="none"/><rect x="3" y="1" width="2" height="4.5" fill="#000"/></svg>
<svg class="ab" style="left:1350px;top:511px" width="12" height="12" viewBox="0 0 12 12"><path d="M2 2.5l7.5 6.5M9.5 2.5l-7.5 6.5" stroke="#000" stroke-width="1.9"/></svg>
<div class="ab" style="left:210px;top:526px;width:1156px;height:181px;background:#fff;border-bottom:1px solid #a0a0a0"></div>
<div class="ab" style="left:211px;top:526px;width:1155px;height:20px;background:#f0f0f0"></div>
<div class="ab" style="left:211px;top:546px;width:18px;height:37px;background:#f0f0f0"></div>
<div class="ab" style="left:215px;top:531px;width:9px;height:9px;border:1px solid #a9a9a9;background:linear-gradient(#fff,#e6e6e6)"></div>
<div class="ab" style="left:217px;top:535px;width:5px;height:1px;background:#2b3f9a"></div>
<div class="t" style="left:233px;top:530px;font-size:12px;font-weight:700;color:#6d6d6d">CH1</div>
<div class="ab" style="left:229px;top:564px;width:1137px;height:1px;background:#ededed"></div>
<div class="ab" style="left:229px;top:583px;width:1137px;height:1px;background:#ededed"></div>
<div class="ab" style="left:354px;top:546px;width:1px;height:160px;background:#ededed"></div>
<div class="t" style="left:233px;top:549px;font-size:12px">+ Pulse Width</div>
<div class="t" style="left:233px;top:568px;font-size:12px">- Pulse Width</div>
<div class="t" style="left:359px;top:549px;font-size:12px;letter-spacing:-0.4px">88.0uS</div>
<div class="t" style="left:359px;top:568px;font-size:12px;letter-spacing:-0.4px">1.55mS</div>
<svg class="ab" style="left:1190px;top:620px" width="120" height="35" viewBox="1190 620 120 35"><path d="M1197.5 646.5C1199 641 1205 638.5 1215 636.5C1230 633 1250 630.5 1275 630.2C1290 630 1297 630.5 1301 631.8" stroke="#e0141e" stroke-width="3.2" fill="none" stroke-linecap="round"/></svg>
<div class="ab" style="left:0;top:707px;width:1366px;height:21px;background:#f0f0f0"></div>
<div class="t" style="left:4px;top:713px;font-size:12px">Running...</div>
<div class="t" style="left:1262px;top:713px;font-size:12px;letter-spacing:-0.3px">13-06-2021  12:57</div>
<div class="ab" style="left:0;top:728px;width:1366px;height:40px;background:#d6d6d6"></div>
<svg class="ab" style="left:15px;top:739px" width="18" height="18" viewBox="0 0 18 18"><path d="M0.5 2.6L7.3 1.7V8.3H0.5z M8.2 1.6L17.3 0.3V8.3H8.2z M0.5 9.2H7.3V15.9L0.5 15z M8.2 9.2H17.3V17.3L8.2 16z" fill="#000"/></svg>
<div class="ab" style="left:49px;top:729px;width:342px;height:39px;background:#fff;border:1px solid #e4e4e4"></div>
<svg class="ab" style="left:59px;top:739px" width="18" height="18" viewBox="0 0 18 18"><circle cx="11" cy="6.5" r="5" stroke="#000" stroke-width="1.2" fill="none"/><path d="M7.3 10.2L1 16.5" stroke="#000" stroke-width="1.3"/></svg>
<div class="t" style="left:88px;top:740px;font-size:15px;letter-spacing:-0.3px;color:#1a1a1a">Type here to search</div>
<svg class="ab" style="left:407px;top:739px" width="18" height="18" viewBox="0 0 18 18"><circle cx="9" cy="9" r="6.7" stroke="#000" stroke-width="2" fill="none"/></svg>
<svg class="ab" style="left:455px;top:739px" width="19" height="18" viewBox="0 0 19 18"><path d="M1 1.5h11M1 16.5h11M1 1v2M12 1v2M1 15v2M12 15v2" stroke="#000" stroke-width="1.1" fill="none"/><rect x="1.5" y="5" width="10" height="8" fill="none" stroke="#000" stroke-width="1.1"/><path d="M16.5 1v16" stroke="#000" stroke-width="1.1"/><rect x="15" y="5.5" width="3" height="3" fill="#000"/></svg>
<svg class="ab" style="left:504px;top:739px" width="22" height="18" viewBox="0 0 22 18"><path d="M0 1h9l1.5 1.5H0z" fill="#e3a21a"/><rect x="0" y="2" width="21" height="14" fill="#ffd35e"/><rect x="0" y="2" width="21" height="2" fill="#f7c948"/><path d="M4 18V9.5h13V18h-4v-4.5H8V18z" fill="#3b8de0"/></svg>
<svg class="ab" style="left:551px;top:735px" width="26" height="26" viewBox="0 0 26 26"><defs>
<linearGradient id="edg1" x1="0" y1="0.2" x2="1" y2="0.8"><stop offset="0" stop-color="#2aa6ee"/><stop offset="0.45" stop-color="#2ec0d8"/><stop offset="1" stop-color="#58dc50"/></linearGradient>
<linearGradient id="edg2" x1="0" y1="0" x2="1" y2="1"><stop offset="0" stop-color="#1a86de"/><stop offset="1" stop-color="#0b4ea6"/></linearGradient></defs>
<circle cx="13" cy="12.8" r="12" fill="url(#edg1)"/>
<path d="M1 12.5C1 6 10 4.5 13.5 8.5C9.5 9.5 8.5 14 11 17.5C13.5 21 19.5 21.5 23.5 19.5C21.5 23 17.5 24.8 13 24.8C6.5 24.8 1 19.5 1 12.5z" fill="url(#edg2)"/>
<ellipse cx="13.6" cy="12.6" rx="3.3" ry="3" fill="#d6d6d6"/>
<path d="M15 15.5C18 17.5 22.5 17.5 25 15V19C22 21 17 20.5 15 15.5z" fill="#d6d6d6"/>
<path d="M16.5 12.6C17 15.5 20 17 25 15.6" stroke="#46cf6a" stroke-width="0" fill="none"/>
</svg>
<svg class="ab" style="left:600px;top:736px" width="34" height="27" viewBox="0 0 34 27">
<path d="M0.8 7.5L12.8 0.5 24.8 7.5z" fill="#0f62c0"/>
<rect x="0.8" y="7.5" width="24" height="15" fill="#1c9ee8"/>
<path d="M12.8 15L24.8 7.5V16z" fill="#3ccaf6"/>
<path d="M2.8 7.8H22.8L12.8 14z" fill="#f2f2f2"/>
<circle cx="25.5" cy="19" r="7.6" fill="rgba(200,210,220,0.6)" stroke="#3a3a3a" stroke-width="0.8"/>
<text x="22" y="23.5" font-family="Liberation Sans" font-size="12" fill="#000">9</text>
</svg>
<div class="ab" style="left:638px;top:728px;width:45px;height:40px;background:#ececec"></div>
<div class="ab" style="left:683px;top:728px;width:1px;height:40px;background:#bdbdbd"></div>
<div class="ab" style="left:638px;top:766px;width:45px;height:2px;background:#1e96d4"></div>
<svg class="ab" style="left:650px;top:736px" width="24" height="24" viewBox="0 0 24 24">
<rect x="1" y="1" width="21" height="17" rx="1" fill="#dcdcdc" stroke="#9a9a9a" stroke-width="0.8"/>
<rect x="3" y="3" width="17" height="12" fill="#1f1f1f"/>
<rect x="3" y="3" width="17" height="4" fill="#4a4a4a"/>
<path d="M3 9.5h6l1-1 1.3-4 1.3 8 1.1-3h6" stroke="#7ed321" stroke-width="1" fill="none"/>
<rect x="18" y="15.5" width="2" height="1" fill="#e04040"/>
<rect x="9" y="19" width="5" height="2" fill="#bbb"/><rect x="6" y="21" width="11" height="1.5" fill="#aaa"/>
</svg>
<div class="ab" style="left:691px;top:766px;width:40px;height:2px;background:#1e96d4"></div>
<svg class="ab" style="left:700px;top:735px" width="24" height="26" viewBox="0 0 24 26">
<path d="M4.6 6.8A8.5 8.5 0 1 1 12 19.5" stroke="#d83b01" stroke-width="3" fill="none"/>
<path d="M12.8 1.5L8.8 16" stroke="#9a9a9a" stroke-width="2.8"/>
<path d="M12.8 1.5L8.8 16" stroke="#f4f4f4" stroke-width="1.4"/>
<path d="M13 2.5L12 17" stroke="#b8b8b8" stroke-width="2"/>
<circle cx="5.5" cy="18.5" r="2.4" stroke="#1a7ed6" stroke-width="2" fill="none"/>
<circle cx="13.2" cy="21.4" r="2.4" stroke="#2a9cf0" stroke-width="2" fill="none"/>
</svg>
<svg class="ab" style="left:946px;top:738px" width="20" height="20" viewBox="0 0 20 20"><defs><linearGradient id="sun" x1="0" y1="0" x2="1" y2="1"><stop offset="0" stop-color="#ffe86a"/><stop offset="1" stop-color="#ff9800"/></linearGradient></defs><circle cx="10" cy="10" r="9" fill="url(#sun)"/></svg>
<div class="t" style="left:976px;top:742px;font-size:13.5px;letter-spacing:-0.4px;color:#333">20°C</div>
<div class="t" style="left:1013px;top:742px;font-size:13.5px;letter-spacing:-0.2px;color:#333">Sunny</div>
<svg class="ab" style="left:1068px;top:743px" width="14" height="10" viewBox="0 0 14 10"><path d="M1 8l6-6 6 6" stroke="#222" stroke-width="1.3" fill="none"/></svg>
<svg class="ab" style="left:1092px;top:740px" width="14" height="17" viewBox="0 0 14 17"><rect x="1" y="5" width="8" height="7" rx="1.5" fill="none" stroke="#222" stroke-width="1.2"/><path d="M9 7l3-1.5v6L9 10z" fill="none" stroke="#222" stroke-width="1.1"/><path d="M2 2.5c2-1 5-1 7 0M2 14.5c2 1 5 1 7 0" stroke="#222" stroke-width="1" fill="none"/></svg>
<svg class="ab" style="left:1114px;top:741px" width="20" height="13" viewBox="0 0 20 13"><path d="M2 11.5h15c2 0 2.5-3 .5-4 0-3-3-5-6-4-1.5-2-5-2-6 1-3 0-5 2-5 4 0 2 1 3 1.5 3z" fill="#888" stroke="#333" stroke-width="1"/></svg>
<svg class="ab" style="left:1139px;top:742px" width="18" height="12" viewBox="0 0 18 12"><rect x="5.5" y="2.5" width="10" height="7" fill="#222" stroke="#222" stroke-width="1"/><rect x="16" y="4.5" width="1.5" height="3" fill="#222"/><path d="M0.5 6h4M3 3v6M1.5 3v3M4 3v3" stroke="#222" stroke-width="1"/></svg>
<svg class="ab" style="left:1165px;top:742px" width="15" height="14" viewBox="0 0 15 14"><path d="M1 13C1 6 6 1 13 1M4 13c0-5 4-9 9-9M7 13c0-3 3-6 6-6" stroke="#222" stroke-width="1.1" fill="none"/><circle cx="13" cy="12.5" r="1.5" fill="#222"/></svg>
<svg class="ab" style="left:1186px;top:742px" width="18" height="13" viewBox="0 0 18 13"><path d="M1 4.5h3l4-3.5v11l-4-3.5H1z" fill="none" stroke="#222" stroke-width="1.1"/><path d="M10.5 4c1 1.5 1 3.5 0 5M12.5 2.5c2 2 2 6 0 8M14.5 1c3 3 3 8 0 11" stroke="#222" stroke-width="1.1" fill="none"/></svg>
<div class="t" style="left:1213px;top:743px;font-size:11.5px;letter-spacing:-0.4px;color:#222">ENG</div>
<div class="t" style="left:1254px;top:733px;font-size:11.5px;letter-spacing:-0.3px;color:#222">12:57 PM</div>
<div class="t" style="left:1250px;top:751px;font-size:11.5px;letter-spacing:-0.3px;color:#222">13/06/2021</div>
<svg class="ab" style="left:1324px;top:739px" width="18" height="18" viewBox="0 0 18 18"><path d="M1.5 1.5h15v12h-5.5l-2 2.5-2-2.5H1.5z" fill="none" stroke="#222" stroke-width="1.1"/></svg>
<div class="ab" style="left:1361px;top:728px;width:1px;height:40px;background:#bdbdbd"></div>
</body></html>
